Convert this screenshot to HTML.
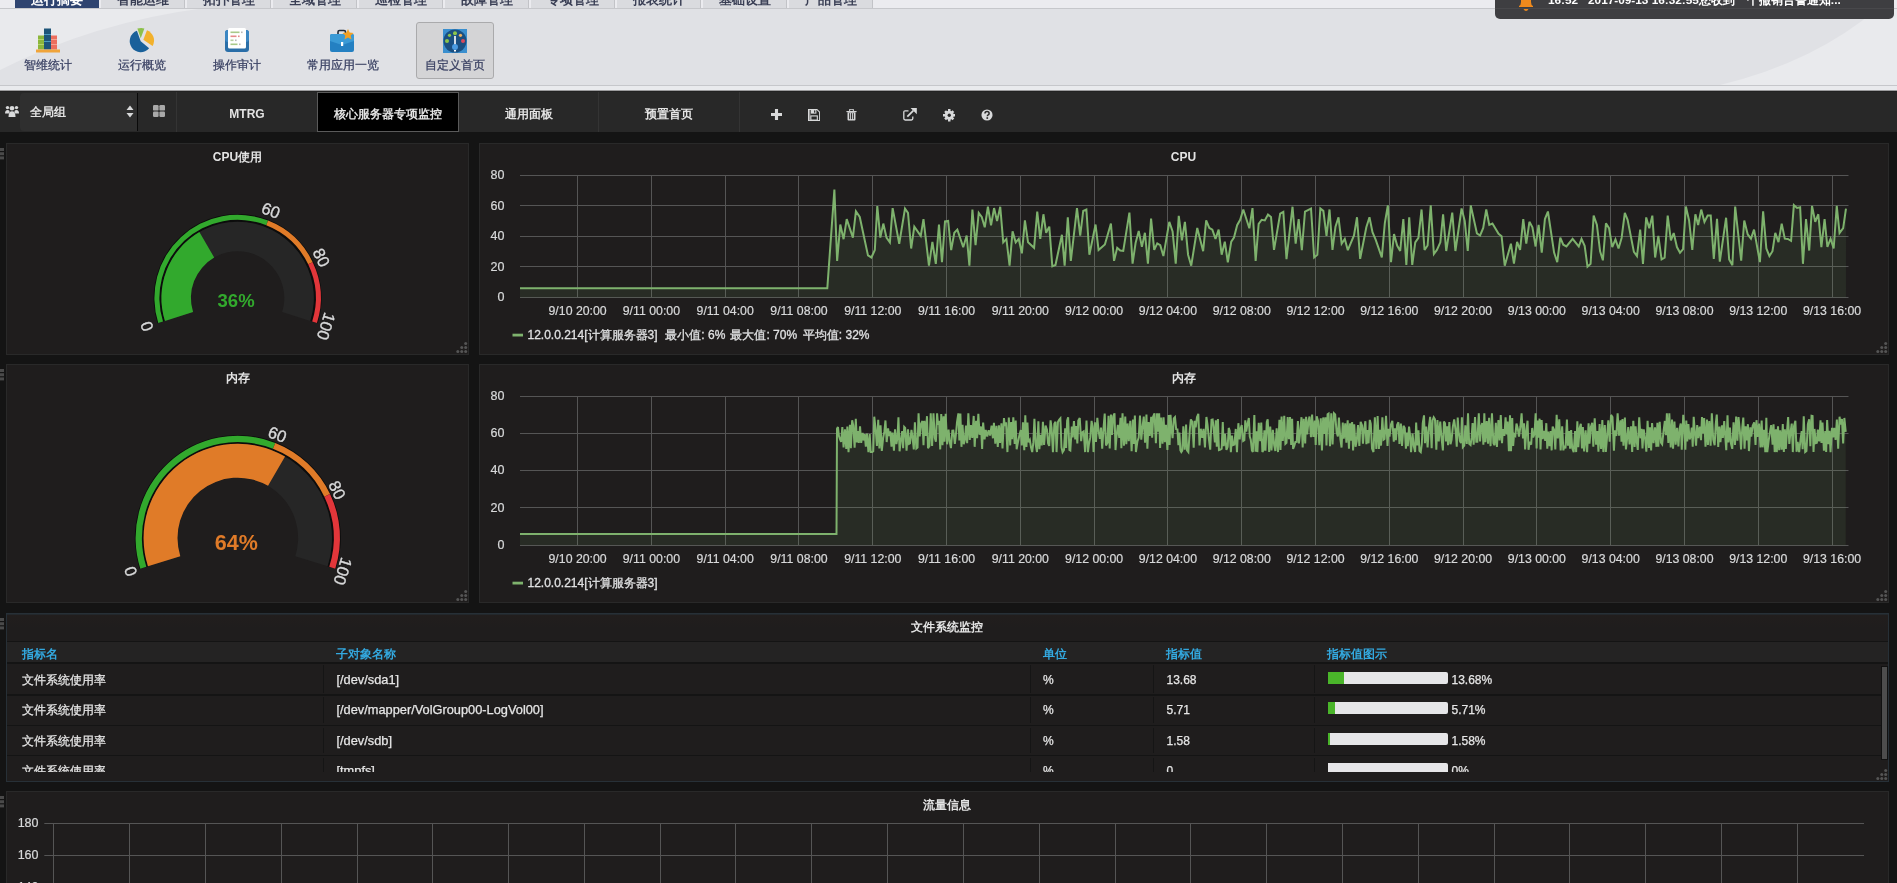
<!DOCTYPE html>
<html><head><meta charset="utf-8">
<style>
*{box-sizing:border-box;margin:0;padding:0}
html,body{width:1897px;height:883px;overflow:hidden;background:#141414;font-family:"Liberation Sans",sans-serif;position:relative}
.a{position:absolute}
#hdr{left:0;top:0;width:1897px;height:92px;background:#e0e1e5;overflow:hidden;will-change:transform}
.tab{top:0;height:8px;background:#dadbdf;border-right:1px solid #c2c3c7;overflow:hidden}
.tab span{position:absolute;left:0;right:0;top:-9px;text-align:center;font-size:13px;font-weight:bold;color:#3a3f55;white-space:nowrap}
.tab.act{background:#2f4470;border-right:none}
.tab.act span{color:#fff}
.tb{top:22px;height:57px;text-align:center}
.tb .lbl{position:absolute;left:0;right:0;top:58px;font-size:12px;color:#3a4163;white-space:nowrap;line-height:14px;-webkit-text-stroke:0.25px #3a4163}
#nav{left:0;top:92px;width:1897px;height:40px;background:#282828;will-change:transform}
.ntab{top:0;height:40px;color:#e3e3e3;font-size:12px;font-weight:bold;text-align:center;line-height:45px;border-right:1px solid #343434}
.panel{background:#1f1d1d;border:1px solid #292929}
.ptitle{position:absolute;left:0;right:0;text-align:center;font-size:12px;font-weight:bold;color:#e3e3e3;white-space:nowrap}
.handle{width:4px;height:12px}
.th{font-size:12px;font-weight:bold;color:#33a9e0;white-space:nowrap;line-height:14px}
.td{font-size:12px;color:#e6e6e6;white-space:nowrap;line-height:14px;-webkit-text-stroke:0.25px #e6e6e6}
</style></head><body>

<div id="hdr" class="a">
  <div class="a" style="left:0;top:0;width:1897px;height:85px;background:#e9eaed"></div>
  <svg class="a" style="left:0;top:0" width="1897" height="85"><path d="M0 70 Q95 22 205 8 L1878 8 Q1815 62 1720 85 L0 85 Z" fill="#e0e1e5"/></svg>
  <div class="a" style="left:0;top:0;width:1897px;height:8px;background:#ebebef"></div>
  <div class="a" style="left:0;top:8px;width:1897px;height:1px;background:#c6c7cb"></div>
  <div class="a tab act" style="left:15px;width:84px"><span>运行摘要</span></div>
  <div class="a tab" style="left:101.4px;width:84px"><span>智能运维</span></div>
  <div class="a tab" style="left:187.4px;width:84px"><span>拓扑管理</span></div>
  <div class="a tab" style="left:273.4px;width:84px"><span>全域管理</span></div>
  <div class="a tab" style="left:359.4px;width:84px"><span>巡检管理</span></div>
  <div class="a tab" style="left:445.4px;width:84px"><span>故障管理</span></div>
  <div class="a tab" style="left:531.4px;width:84px"><span>专项管理</span></div>
  <div class="a tab" style="left:617.4px;width:84px"><span>报表统计</span></div>
  <div class="a tab" style="left:703.4px;width:84px"><span>基础设置</span></div>
  <div class="a tab" style="left:789.4px;width:84px"><span>产品管理</span></div>

  <!-- toolbar buttons -->
  <div class="a tb" style="left:18px;width:60px">
    <svg class="a" style="left:18px;top:6px" width="25" height="25" viewBox="0 0 25 25">
      <rect x="2" y="7.5" width="6" height="14" fill="#8cb63c"/>
      <rect x="8" y="0.5" width="7" height="21" fill="#1d5479"/>
      <rect x="15" y="7.5" width="6" height="14" fill="#ec6e5e"/>
      <rect x="2" y="11" width="6" height="1" fill="#b5d36a"/><rect x="2" y="16" width="6" height="1" fill="#b5d36a"/>
      <rect x="8" y="6" width="7" height="1" fill="#4a9ac0"/><rect x="8" y="13" width="7" height="1" fill="#4a9ac0"/>
      <rect x="15" y="11" width="6" height="1" fill="#f5a08f"/><rect x="15" y="16" width="6" height="1" fill="#f5a08f"/>
      <rect x="0" y="21.5" width="24" height="3" fill="#f0a43a"/>
    </svg>
    <div class="lbl" style="top:36px">智维统计</div>
  </div>
  <div class="a tb" style="left:112px;width:60px">
    <svg class="a" style="left:16px;top:5px" width="30" height="28" viewBox="0 0 30 28">
      <path d="M12.7 14.2 L21.13 21.27 A11 11 0 1 1 8.94 3.86 Z" fill="#19609a"/>
      <path d="M12.7 11.2 L9.4 1.6 A10.5 10.5 0 0 1 16.4 1.4 Z" fill="#8cc04a"/>
      <path d="M15.3 12.7 L19.0 3.3 A11 11 0 0 1 24.6 19.0 Z" fill="#f2b12c"/>
    </svg>
    <div class="lbl" style="top:36px">运行概览</div>
  </div>
  <div class="a tb" style="left:207px;width:60px">
    <svg class="a" style="left:18px;top:6px" width="25" height="25" viewBox="0 0 25 25">
      <rect x="0" y="2" width="24" height="22" rx="3" fill="#2a6ea8"/>
      <rect x="0" y="2" width="24" height="12" rx="3" fill="#3b86c3"/>
      <rect x="3" y="0" width="18" height="20.5" rx="1.5" fill="#ffffff"/>
      <rect x="5.5" y="3.5" width="9" height="1.6" fill="#a9c98a"/><rect x="16" y="3.5" width="1.6" height="1.6" fill="#b8b8b8"/>
      <rect x="5.5" y="7.5" width="6" height="1.6" fill="#e58a8a"/><rect x="13" y="7.5" width="1.6" height="1.6" fill="#e58a8a"/>
      <rect x="5.5" y="11.5" width="3" height="1.6" fill="#b7cfa0"/><rect x="10" y="11.5" width="1.6" height="1.6" fill="#b8b8b8"/>
      <rect x="5.5" y="15.5" width="7" height="1.6" fill="#a9c98a"/><rect x="14" y="15.5" width="1.6" height="1.6" fill="#b8b8b8"/>
    </svg>
    <div class="lbl" style="top:36px">操作审计</div>
  </div>
  <div class="a tb" style="left:304px;width:78px">
    <svg class="a" style="left:26px;top:6px" width="26" height="25" viewBox="0 0 26 25">
      <path d="M8 6.5 V4 Q8 2.5 9.5 2.5 H14 Q15.5 2.5 15.5 4 V6.5" fill="none" stroke="#1f2a38" stroke-width="1.6"/>
      <rect x="0" y="6" width="24" height="18" rx="2" fill="#2480c2"/>
      <path d="M0 8 Q0 6 2 6 H22 Q24 6 24 8 V13 L12 17 L0 13 Z" fill="#3a9ad6"/>
      <rect x="11" y="14" width="2.2" height="4" fill="#ffffff"/>
      <path d="M18 1 L19.7 4.6 L23.6 5 L20.7 7.6 L21.5 11.5 L18 9.5 L14.5 11.5 L15.3 7.6 L12.4 5 L16.3 4.6 Z" fill="#f2a024"/>
    </svg>
    <div class="lbl" style="top:36px">常用应用一览</div>
  </div>
  <div class="a tb" style="left:416px;width:78px;background:#d4d4d6;border:1px solid #aaaaac;border-radius:3px">
    <svg class="a" style="left:26px;top:6px" width="24" height="24" viewBox="0 0 24 24">
      <rect x="0" y="0" width="24" height="24" fill="#3a8fcf"/>
      <circle cx="12" cy="12" r="11.5" fill="#1b4f80"/>
      <circle cx="12" cy="4.3" r="2" fill="#8cc54a"/>
      <circle cx="6.5" cy="6.3" r="1.6" fill="#8cc54a"/>
      <circle cx="4" cy="12" r="2" fill="#8cc54a"/>
      <circle cx="17.5" cy="6.3" r="1.6" fill="#f0b060"/>
      <circle cx="20" cy="12" r="2" fill="#d9495a"/>
      <rect x="11.2" y="7" width="1.6" height="9" fill="#ffffff"/>
      <circle cx="12" cy="18" r="3" fill="#4a9ae0"/>
      <rect x="11" y="21" width="2" height="1.5" fill="#ffffff"/>
    </svg>
    <div class="lbl" style="top:35px">自定义首页</div>
  </div>

  <!-- notification -->
  <div class="a" style="left:1495px;top:-10px;width:399px;height:29px;background:#3e3e41;border-radius:5px;overflow:hidden">
    <div class="a" style="left:0;top:18px;width:399px;height:1px;background:#48484b"></div>
    <svg class="a" style="left:23px;top:0px" width="16" height="21" viewBox="0 0 16 21">
      <path d="M3 0 L13 0 L13 12 Q13 15 15 16 L15 17 L1 17 L1 16 Q3 15 3 12 Z" fill="#f08a1c"/>
      <path d="M5.5 19 H10.5 Q9.5 21 8 21 Q6.5 21 5.5 19 Z" fill="#f08a1c"/>
    </svg>
    <div class="a" style="left:53px;top:3px;font-size:11.8px;font-weight:bold;color:#fff;white-space:nowrap;line-height:14px">16:52&nbsp;&nbsp;&nbsp;2017-09-13 16:32:55您收到一个撤销告警通知...</div>
  </div>
  <div class="a" style="left:0;top:85px;width:1897px;height:1px;background:#c6c7cb"></div>
  <div class="a" style="left:0;top:86px;width:1897px;height:4px;background:#e9eaed"></div>
  <div class="a" style="left:0;top:90px;width:1897px;height:1px;background:#9c9c9e"></div>
  <div class="a" style="left:0;top:91px;width:1897px;height:1px;background:#222"></div>
</div>

<div id="nav" class="a">
  <svg class="a" style="left:5px;top:13px" width="14" height="13" viewBox="0 0 14 13">
    <circle cx="2.5" cy="2.6" r="1.7" fill="#d8d9da"/><circle cx="11.5" cy="2.6" r="1.7" fill="#d8d9da"/>
    <circle cx="7" cy="3.3" r="2.3" fill="#d8d9da"/>
    <path d="M0 8.5 Q0 5 2.5 5 Q4 5 4.5 6 L4.5 8.5 Z" fill="#d8d9da"/>
    <path d="M14 8.5 Q14 5 11.5 5 Q10 5 9.5 6 L9.5 8.5 Z" fill="#d8d9da"/>
    <path d="M3.5 12 Q3.5 6.3 7 6.3 Q10.5 6.3 10.5 12 Z" fill="#d8d9da"/>
  </svg>
  <div class="a" style="left:20px;top:1px;width:117px;height:38px;background:#2f2f2f;border-radius:4px 0 0 4px"></div>
  <div class="a" style="left:137px;top:1px;width:1px;height:38px;background:#0a0a0a"></div>
  <div class="a" style="left:30px;top:0;line-height:41px;font-size:12px;color:#e3e3e3;font-weight:bold;white-space:nowrap">全局组</div>
  <svg class="a" style="left:126px;top:13px" width="8" height="13" viewBox="0 0 8 13"><path d="M4 0.5 L7.5 5 L0.5 5 Z M4 12.5 L7.5 8 L0.5 8 Z" fill="#d8d9da"/></svg>
  <svg class="a" style="left:153px;top:13px" width="13" height="13" viewBox="0 0 13 13">
    <rect x="0" y="0" width="5.6" height="5.6" rx="1.2" fill="#a9a9a9"/><rect x="6.4" y="0" width="5.6" height="5.6" rx="1.2" fill="#a9a9a9"/>
    <rect x="0" y="6.4" width="5.6" height="5.6" rx="1.2" fill="#a9a9a9"/><rect x="6.4" y="6.4" width="5.6" height="5.6" rx="1.2" fill="#a9a9a9"/>
  </svg>
  <div class="a" style="left:176px;top:0;width:1px;height:40px;background:#343434"></div>
  <div class="a ntab" style="left:177px;width:140px;border:none">MTRG</div>
  <div class="a ntab" style="left:317px;width:142px;background:#000;border:1px solid #5a5a5a;line-height:43px">核心服务器专项监控</div>
  <div class="a ntab" style="left:459px;width:140px">通用面板</div>
  <div class="a ntab" style="left:599px;width:141px">预置首页</div>
  <svg class="a" style="left:771.3px;top:17.3px" width="11" height="11" viewBox="0 0 12 12"><path d="M4.3 0 H7.7 V4.3 H12 V7.7 H7.7 V12 H4.3 V7.7 H0 V4.3 H4.3 Z" fill="#d8d9da"/></svg>
  <svg class="a" style="left:808px;top:17px" width="12.2" height="12" viewBox="0 0 13 13">
    <path d="M0.5 0.5 H9.5 L12.5 3.5 V12.5 H0.5 Z" fill="none" stroke="#d8d9da" stroke-width="1.2"/>
    <rect x="3" y="1" width="6" height="4" fill="#d8d9da"/><rect x="6.5" y="1.5" width="1.3" height="2.5" fill="#282828"/>
    <rect x="1" y="1" width="1.5" height="11" fill="#9a9a9a"/>
    <rect x="3" y="7.5" width="7" height="4.5" fill="none" stroke="#d8d9da" stroke-width="1.2"/>
  </svg>
  <svg class="a" style="left:846px;top:17px" width="11" height="12" viewBox="0 0 11 13">
    <path d="M0 2.2 H11 V3.4 H0 Z" fill="#d8d9da"/><path d="M3.5 2.2 V1 Q3.5 0.3 4.2 0.3 H6.8 Q7.5 0.3 7.5 1 V2.2" fill="none" stroke="#d8d9da" stroke-width="1.1"/>
    <path d="M1.2 3.4 H9.8 V11.5 Q9.8 12.5 8.8 12.5 H2.2 Q1.2 12.5 1.2 11.5 Z" fill="#d8d9da"/>
    <rect x="3" y="4.5" width="1" height="6.5" fill="#282828"/><rect x="5" y="4.5" width="1" height="6.5" fill="#282828"/><rect x="7" y="4.5" width="1" height="6.5" fill="#282828"/>
  </svg>
  <svg class="a" style="left:903px;top:15.8px" width="14" height="13" viewBox="0 0 14 13">
    <path d="M5.5 2.8 H2.2 Q0.8 2.8 0.8 4.2 V10.6 Q0.8 12 2.2 12 H8.4 Q9.8 12 9.8 10.6 V8.5" fill="none" stroke="#d8d9da" stroke-width="1.3"/>
    <path d="M4.3 8.6 L10.3 2.6" stroke="#d8d9da" stroke-width="1.8"/><path d="M7.6 0 H13.8 V6.2 Z" fill="#d8d9da"/>
  </svg>
  <svg class="a" style="left:942.5px;top:17px" width="12.5" height="12.5" viewBox="0 0 13 13">
    <g fill="#d8d9da"><circle cx="6.5" cy="6.5" r="4.7"/>
    <rect x="5.2" y="0" width="2.6" height="13"/><rect x="0" y="5.2" width="13" height="2.6"/>
    <rect x="5.2" y="0.4" width="2.6" height="12.2" transform="rotate(45 6.5 6.5)"/><rect x="5.2" y="0.4" width="2.6" height="12.2" transform="rotate(-45 6.5 6.5)"/></g>
    <circle cx="6.5" cy="6.5" r="1.7" fill="#282828"/>
  </svg>
  <svg class="a" style="left:980.6px;top:17px" width="12" height="12" viewBox="0 0 13 13">
    <circle cx="6.5" cy="6.5" r="6" fill="#d8d9da"/>
    <path d="M4.3 5 Q4.3 2.8 6.6 2.8 Q8.8 2.8 8.8 4.8 Q8.8 6 7.4 6.6 Q6.9 6.9 6.9 7.8" fill="none" stroke="#282828" stroke-width="1.6"/>
    <rect x="5.9" y="8.9" width="1.8" height="1.8" fill="#282828"/>
  </svg>
</div>

<!-- panels -->
<div class="a panel" style="left:6px;top:143px;width:463px;height:212px"></div>
<div class="a panel" style="left:479px;top:143px;width:1410px;height:212px"></div>
<div class="a panel" style="left:6px;top:364px;width:463px;height:239px"></div>
<div class="a panel" style="left:479px;top:364px;width:1410px;height:239px"></div>
<div class="a panel" style="left:6px;top:613px;width:1883px;height:169px;border-color:#273037;background:linear-gradient(#221e1d,#1f1d1d 14px)"></div>
<div class="a" style="left:7px;top:614px;width:1881px;height:1px;background:#23282c"></div>
<div class="a panel" style="left:6px;top:791px;width:1883px;height:120px"></div>

<!-- PANELS_START -->
<div class="a" style="left:7px;top:641px;width:1881px;height:131px;overflow:hidden;will-change:transform">
<div class="a" style="left:0;top:0;width:1881px;height:1.5px;background:#141414"></div>
<div class="a" style="left:0;top:1px;width:1881px;height:20px;background:#242323"></div>
<div class="a" style="left:0;top:21px;width:1881px;height:1.5px;background:#141414"></div>
<div class="a th" style="left:15px;top:6px">指标名</div>
<div class="a th" style="left:329px;top:6px">子对象名称</div>
<div class="a th" style="left:1036px;top:6px">单位</div>
<div class="a th" style="left:1159px;top:6px">指标值</div>
<div class="a th" style="left:1320px;top:6px">指标值图示</div>
<div class="a" style="left:316px;top:24.0px;width:1px;height:27.8px;background:#151515"></div>
<div class="a" style="left:1023px;top:24.0px;width:1px;height:27.8px;background:#151515"></div>
<div class="a" style="left:1146px;top:24.0px;width:1px;height:27.8px;background:#151515"></div>
<div class="a" style="left:1307px;top:24.0px;width:1px;height:27.8px;background:#151515"></div>
<div class="a td" style="left:15px;top:32.1px">文件系统使用率</div>
<div class="a td" style="left:329.5px;top:32.1px;font-size:12.8px">[/dev/sda1]</div>
<div class="a td" style="left:1036px;top:32.1px">%</div>
<div class="a td" style="left:1159.5px;top:32.1px">13.68</div>
<div class="a" style="left:1321px;top:31.1px;width:120px;height:12px;background:#e6e6e8;border-radius:0 2px 2px 0;overflow:hidden"><div style="width:16.42px;height:12px;background:#4ab52a"></div></div>
<div class="a td" style="left:1444.5px;top:32.1px">13.68%</div>
<div class="a" style="left:0;top:53.3px;width:1874px;height:1.5px;background:#141414"></div>
<div class="a" style="left:316px;top:56.0px;width:1px;height:26.3px;background:#151515"></div>
<div class="a" style="left:1023px;top:56.0px;width:1px;height:26.3px;background:#151515"></div>
<div class="a" style="left:1146px;top:56.0px;width:1px;height:26.3px;background:#151515"></div>
<div class="a" style="left:1307px;top:56.0px;width:1px;height:26.3px;background:#151515"></div>
<div class="a td" style="left:15px;top:62.3px">文件系统使用率</div>
<div class="a td" style="left:329.5px;top:62.3px;font-size:12.8px">[/dev/mapper/VolGroup00-LogVol00]</div>
<div class="a td" style="left:1036px;top:62.3px">%</div>
<div class="a td" style="left:1159.5px;top:62.3px">5.71</div>
<div class="a" style="left:1321px;top:61.3px;width:120px;height:12px;background:#e6e6e8;border-radius:0 2px 2px 0;overflow:hidden"><div style="width:6.85px;height:12px;background:#4ab52a"></div></div>
<div class="a td" style="left:1444.5px;top:62.3px">5.71%</div>
<div class="a" style="left:0;top:83.8px;width:1874px;height:1.5px;background:#141414"></div>
<div class="a" style="left:316px;top:86.5px;width:1px;height:25.9px;background:#151515"></div>
<div class="a" style="left:1023px;top:86.5px;width:1px;height:25.9px;background:#151515"></div>
<div class="a" style="left:1146px;top:86.5px;width:1px;height:25.9px;background:#151515"></div>
<div class="a" style="left:1307px;top:86.5px;width:1px;height:25.9px;background:#151515"></div>
<div class="a td" style="left:15px;top:92.5px">文件系统使用率</div>
<div class="a td" style="left:329.5px;top:92.5px;font-size:12.8px">[/dev/sdb]</div>
<div class="a td" style="left:1036px;top:92.5px">%</div>
<div class="a td" style="left:1159.5px;top:92.5px">1.58</div>
<div class="a" style="left:1321px;top:91.5px;width:120px;height:12px;background:#e6e6e8;border-radius:0 2px 2px 0;overflow:hidden"><div style="width:1.90px;height:12px;background:#4ab52a"></div></div>
<div class="a td" style="left:1444.5px;top:92.5px">1.58%</div>
<div class="a" style="left:0;top:113.9px;width:1874px;height:1.5px;background:#141414"></div>
<div class="a" style="left:316px;top:116.5px;width:1px;height:22.0px;background:#151515"></div>
<div class="a" style="left:1023px;top:116.5px;width:1px;height:22.0px;background:#151515"></div>
<div class="a" style="left:1146px;top:116.5px;width:1px;height:22.0px;background:#151515"></div>
<div class="a" style="left:1307px;top:116.5px;width:1px;height:22.0px;background:#151515"></div>
<div class="a td" style="left:15px;top:122.7px">文件系统使用率</div>
<div class="a td" style="left:329.5px;top:122.7px;font-size:12.8px">[tmpfs]</div>
<div class="a td" style="left:1036px;top:122.7px">%</div>
<div class="a td" style="left:1159.5px;top:122.7px">0</div>
<div class="a" style="left:1321px;top:121.7px;width:120px;height:12px;background:#e6e6e8;border-radius:0 2px 2px 0;overflow:hidden"><div style="width:0.00px;height:12px;background:#4ab52a"></div></div>
<div class="a td" style="left:1444.5px;top:122.7px">0%</div>
<div class="a" style="left:1874px;top:25px;width:7px;height:94px;background:#4d4d4d;border:1px solid #111"></div>
</div>
<svg class="a" style="left:0;top:0;will-change:transform" width="1897" height="883" font-family="'Liberation Sans',sans-serif">
<rect x="0" y="148.0" width="4" height="3" fill="#4a4a4a"/><rect x="0" y="152.2" width="4" height="3" fill="#4a4a4a"/><rect x="0" y="156.4" width="4" height="3" fill="#4a4a4a"/>
<rect x="0" y="369.0" width="4" height="3" fill="#4a4a4a"/><rect x="0" y="373.2" width="4" height="3" fill="#4a4a4a"/><rect x="0" y="377.4" width="4" height="3" fill="#4a4a4a"/>
<rect x="0" y="618.0" width="4" height="3" fill="#4a4a4a"/><rect x="0" y="622.2" width="4" height="3" fill="#4a4a4a"/><rect x="0" y="626.4" width="4" height="3" fill="#4a4a4a"/>
<rect x="0" y="796.0" width="4" height="3" fill="#4a4a4a"/><rect x="0" y="800.2" width="4" height="3" fill="#4a4a4a"/><rect x="0" y="804.4" width="4" height="3" fill="#4a4a4a"/>
<text x="237.5" y="160.5" text-anchor="middle" font-size="12" font-weight="bold" fill="#e3e3e3">CPU使用</text>
<text x="1183.5" y="160.5" text-anchor="middle" font-size="12" font-weight="bold" fill="#e3e3e3">CPU</text>
<text x="237.5" y="381.5" text-anchor="middle" font-size="12" font-weight="bold" fill="#e3e3e3">内存</text>
<text x="1183.5" y="381.5" text-anchor="middle" font-size="12" font-weight="bold" fill="#e3e3e3">内存</text>
<text x="947" y="630.5" text-anchor="middle" font-size="12" font-weight="bold" fill="#e3e3e3">文件系统监控</text>
<text x="947" y="808.5" text-anchor="middle" font-size="12" font-weight="bold" fill="#e3e3e3">流量信息</text>
<path d="M157.49 323.26 A84.0 84.0 0 1 1 317.71 323.26 L309.99 320.82 A75.9 75.9 0 1 0 165.21 320.82 Z" fill="#0c0c0c"/>
<path d="M164.93 320.91 A76.2 76.2 0 1 1 310.27 320.91 L282.14 312.04 A46.7 46.7 0 1 0 193.06 312.04 Z" fill="#262626"/>
<path d="M164.93 320.91 A76.2 76.2 0 0 1 199.38 232.08 L214.18 257.60 A46.7 46.7 0 0 0 193.06 312.04 Z" fill="#32a92d"/>
<path d="M158.25 323.02 A83.2 83.2 0 0 1 268.09 220.59 L266.26 225.24 A78.2 78.2 0 0 0 163.02 321.52 Z" fill="#32a92d"/>
<path d="M268.09 220.59 A83.2 83.2 0 0 1 312.70 262.18 L308.18 264.33 A78.2 78.2 0 0 0 266.26 225.24 Z" fill="#e07b28"/>
<path d="M312.70 262.18 A83.2 83.2 0 0 1 316.95 323.02 L312.18 321.52 A78.2 78.2 0 0 0 308.18 264.33 Z" fill="#e2363a"/>
<text x="0" y="0" transform="translate(146.56 326.36) rotate(252.5)" text-anchor="middle" dominant-baseline="central" font-size="16.5" fill="#d8d9da" stroke="#d8d9da" stroke-width="0.35">0</text>
<text x="0" y="0" transform="translate(271.06 210.26) rotate(381.5)" text-anchor="middle" dominant-baseline="central" font-size="16.5" fill="#d8d9da" stroke="#d8d9da" stroke-width="0.35">60</text>
<text x="0" y="0" transform="translate(321.61 257.40) rotate(424.5)" text-anchor="middle" dominant-baseline="central" font-size="16.5" fill="#d8d9da" stroke="#d8d9da" stroke-width="0.35">80</text>
<text x="0" y="0" transform="translate(326.44 326.36) rotate(467.5)" text-anchor="middle" dominant-baseline="central" font-size="16.5" fill="#d8d9da" stroke="#d8d9da" stroke-width="0.35">100</text>
<text x="236.1" y="307" text-anchor="middle" font-size="18.5" font-weight="bold" fill="#32a92d">36%</text>
<path d="M139.57 568.97 A103.0 103.0 0 1 1 336.03 568.97 L327.35 566.24 A93.9 93.9 0 1 0 148.25 566.24 Z" fill="#0c0c0c"/>
<path d="M147.96 566.33 A94.2 94.2 0 1 1 327.64 566.33 L295.31 556.13 A60.3 60.3 0 1 0 180.29 556.13 Z" fill="#262626"/>
<path d="M147.96 566.33 A94.2 94.2 0 0 1 285.04 456.50 L268.04 485.83 A60.3 60.3 0 0 0 180.29 556.13 Z" fill="#e07b28"/>
<path d="M140.33 568.73 A102.2 102.2 0 0 1 275.26 442.91 L272.95 448.77 A95.9 95.9 0 0 0 146.34 566.84 Z" fill="#32a92d"/>
<path d="M275.26 442.91 A102.2 102.2 0 0 1 330.04 494.00 L324.36 496.71 A95.9 95.9 0 0 0 272.95 448.77 Z" fill="#e07b28"/>
<path d="M330.04 494.00 A102.2 102.2 0 0 1 335.27 568.73 L329.26 566.84 A95.9 95.9 0 0 0 324.36 496.71 Z" fill="#e2363a"/>
<text x="0" y="0" transform="translate(130.36 571.53) rotate(252.5)" text-anchor="middle" dominant-baseline="central" font-size="16.5" fill="#d8d9da" stroke="#d8d9da" stroke-width="0.35">0</text>
<text x="0" y="0" transform="translate(277.56 434.26) rotate(381.5)" text-anchor="middle" dominant-baseline="central" font-size="16.5" fill="#d8d9da" stroke="#d8d9da" stroke-width="0.35">60</text>
<text x="0" y="0" transform="translate(337.34 490.00) rotate(424.5)" text-anchor="middle" dominant-baseline="central" font-size="16.5" fill="#d8d9da" stroke="#d8d9da" stroke-width="0.35">80</text>
<text x="0" y="0" transform="translate(343.04 571.53) rotate(467.5)" text-anchor="middle" dominant-baseline="central" font-size="16.5" fill="#d8d9da" stroke="#d8d9da" stroke-width="0.35">100</text>
<text x="236.3" y="549.5" text-anchor="middle" font-size="21.5" font-weight="bold" fill="#e07b28">64%</text>
<line x1="520" y1="297.50" x2="1848.5" y2="297.50" stroke="#555555" stroke-width="1"/>
<text x="504.5" y="301.20" text-anchor="end" font-size="12.5" fill="#d8d9da" stroke="#d8d9da" stroke-width="0.2">0</text>
<line x1="520" y1="266.50" x2="1848.5" y2="266.50" stroke="#555555" stroke-width="1"/>
<text x="504.5" y="270.65" text-anchor="end" font-size="12.5" fill="#d8d9da" stroke="#d8d9da" stroke-width="0.2">20</text>
<line x1="520" y1="236.50" x2="1848.5" y2="236.50" stroke="#555555" stroke-width="1"/>
<text x="504.5" y="240.10" text-anchor="end" font-size="12.5" fill="#d8d9da" stroke="#d8d9da" stroke-width="0.2">40</text>
<line x1="520" y1="205.50" x2="1848.5" y2="205.50" stroke="#555555" stroke-width="1"/>
<text x="504.5" y="209.55" text-anchor="end" font-size="12.5" fill="#d8d9da" stroke="#d8d9da" stroke-width="0.2">60</text>
<line x1="520" y1="175.50" x2="1848.5" y2="175.50" stroke="#555555" stroke-width="1"/>
<text x="504.5" y="179.00" text-anchor="end" font-size="12.5" fill="#d8d9da" stroke="#d8d9da" stroke-width="0.2">80</text>
<line x1="577.50" y1="175.00" x2="577.50" y2="298.00" stroke="#555555" stroke-width="1"/>
<text x="577.60" y="315" text-anchor="middle" font-size="12.3" fill="#d8d9da" stroke="#d8d9da" stroke-width="0.2">9/10 20:00</text>
<line x1="651.50" y1="175.00" x2="651.50" y2="298.00" stroke="#555555" stroke-width="1"/>
<text x="651.39" y="315" text-anchor="middle" font-size="12.3" fill="#d8d9da" stroke="#d8d9da" stroke-width="0.2">9/11 00:00</text>
<line x1="725.50" y1="175.00" x2="725.50" y2="298.00" stroke="#555555" stroke-width="1"/>
<text x="725.18" y="315" text-anchor="middle" font-size="12.3" fill="#d8d9da" stroke="#d8d9da" stroke-width="0.2">9/11 04:00</text>
<line x1="798.50" y1="175.00" x2="798.50" y2="298.00" stroke="#555555" stroke-width="1"/>
<text x="798.97" y="315" text-anchor="middle" font-size="12.3" fill="#d8d9da" stroke="#d8d9da" stroke-width="0.2">9/11 08:00</text>
<line x1="872.50" y1="175.00" x2="872.50" y2="298.00" stroke="#555555" stroke-width="1"/>
<text x="872.76" y="315" text-anchor="middle" font-size="12.3" fill="#d8d9da" stroke="#d8d9da" stroke-width="0.2">9/11 12:00</text>
<line x1="946.50" y1="175.00" x2="946.50" y2="298.00" stroke="#555555" stroke-width="1"/>
<text x="946.55" y="315" text-anchor="middle" font-size="12.3" fill="#d8d9da" stroke="#d8d9da" stroke-width="0.2">9/11 16:00</text>
<line x1="1020.50" y1="175.00" x2="1020.50" y2="298.00" stroke="#555555" stroke-width="1"/>
<text x="1020.34" y="315" text-anchor="middle" font-size="12.3" fill="#d8d9da" stroke="#d8d9da" stroke-width="0.2">9/11 20:00</text>
<line x1="1094.50" y1="175.00" x2="1094.50" y2="298.00" stroke="#555555" stroke-width="1"/>
<text x="1094.13" y="315" text-anchor="middle" font-size="12.3" fill="#d8d9da" stroke="#d8d9da" stroke-width="0.2">9/12 00:00</text>
<line x1="1167.50" y1="175.00" x2="1167.50" y2="298.00" stroke="#555555" stroke-width="1"/>
<text x="1167.92" y="315" text-anchor="middle" font-size="12.3" fill="#d8d9da" stroke="#d8d9da" stroke-width="0.2">9/12 04:00</text>
<line x1="1241.50" y1="175.00" x2="1241.50" y2="298.00" stroke="#555555" stroke-width="1"/>
<text x="1241.71" y="315" text-anchor="middle" font-size="12.3" fill="#d8d9da" stroke="#d8d9da" stroke-width="0.2">9/12 08:00</text>
<line x1="1315.50" y1="175.00" x2="1315.50" y2="298.00" stroke="#555555" stroke-width="1"/>
<text x="1315.50" y="315" text-anchor="middle" font-size="12.3" fill="#d8d9da" stroke="#d8d9da" stroke-width="0.2">9/12 12:00</text>
<line x1="1389.50" y1="175.00" x2="1389.50" y2="298.00" stroke="#555555" stroke-width="1"/>
<text x="1389.29" y="315" text-anchor="middle" font-size="12.3" fill="#d8d9da" stroke="#d8d9da" stroke-width="0.2">9/12 16:00</text>
<line x1="1463.50" y1="175.00" x2="1463.50" y2="298.00" stroke="#555555" stroke-width="1"/>
<text x="1463.08" y="315" text-anchor="middle" font-size="12.3" fill="#d8d9da" stroke="#d8d9da" stroke-width="0.2">9/12 20:00</text>
<line x1="1536.50" y1="175.00" x2="1536.50" y2="298.00" stroke="#555555" stroke-width="1"/>
<text x="1536.87" y="315" text-anchor="middle" font-size="12.3" fill="#d8d9da" stroke="#d8d9da" stroke-width="0.2">9/13 00:00</text>
<line x1="1610.50" y1="175.00" x2="1610.50" y2="298.00" stroke="#555555" stroke-width="1"/>
<text x="1610.66" y="315" text-anchor="middle" font-size="12.3" fill="#d8d9da" stroke="#d8d9da" stroke-width="0.2">9/13 04:00</text>
<line x1="1684.50" y1="175.00" x2="1684.50" y2="298.00" stroke="#555555" stroke-width="1"/>
<text x="1684.45" y="315" text-anchor="middle" font-size="12.3" fill="#d8d9da" stroke="#d8d9da" stroke-width="0.2">9/13 08:00</text>
<line x1="1758.50" y1="175.00" x2="1758.50" y2="298.00" stroke="#555555" stroke-width="1"/>
<text x="1758.24" y="315" text-anchor="middle" font-size="12.3" fill="#d8d9da" stroke="#d8d9da" stroke-width="0.2">9/13 12:00</text>
<line x1="1832.50" y1="175.00" x2="1832.50" y2="298.00" stroke="#555555" stroke-width="1"/>
<text x="1832.03" y="315" text-anchor="middle" font-size="12.3" fill="#d8d9da" stroke="#d8d9da" stroke-width="0.2">9/13 16:00</text>
<path d="M520.00 288.33 L827.30 288.33 L834.39 189.59 L837.13 260.87 L840.29 224.54 L843.57 239.21 L846.73 219.06 L852.89 237.57 L855.91 211.25 L859.75 217.01 L867.97 255.38 L871.40 257.44 L874.82 249.90 L877.29 206.04 L880.31 237.57 L883.32 223.59 L886.47 237.57 L889.90 242.36 L892.64 208.10 L899.22 243.73 L904.98 208.51 L907.99 212.89 L911.15 248.53 L914.30 226.60 L920.74 235.92 L923.48 219.06 L928.96 265.66 L932.39 241.95 L935.82 263.88 L938.97 224.54 L941.98 262.24 L945.00 221.39 L948.15 220.84 L951.17 250.18 L954.32 232.77 L957.34 229.62 L963.23 247.16 L966.66 235.51 L969.40 265.66 L972.41 209.47 L975.56 245.10 L978.72 212.89 L981.73 217.01 L984.75 227.29 L987.90 206.73 L991.05 225.23 L994.07 208.10 L997.08 221.12 L1000.24 206.73 L1003.25 242.36 L1006.40 238.94 L1009.56 265.66 L1012.57 231.40 L1015.72 242.36 L1018.74 238.94 L1021.89 253.33 L1024.91 220.43 L1028.06 242.36 L1034.09 247.85 L1037.24 211.52 L1040.26 238.94 L1043.41 214.27 L1046.15 232.77 L1049.30 226.60 L1052.32 266.35 L1055.47 264.98 L1061.91 234.82 L1064.65 265.66 L1067.81 217.28 L1070.82 260.87 L1076.99 208.10 L1080.21 235.51 L1083.22 210.84 L1086.38 209.47 L1089.39 254.70 L1095.56 224.54 L1098.57 249.90 L1101.73 247.16 L1104.88 244.42 L1110.91 223.59 L1114.06 260.87 L1117.21 247.85 L1120.23 250.59 L1123.25 251.00 L1129.41 212.62 L1132.57 263.61 L1135.58 243.05 L1138.73 230.99 L1141.89 246.89 L1144.90 232.77 L1147.92 263.61 L1151.07 218.65 L1154.22 249.90 L1157.24 243.32 L1160.25 245.10 L1163.40 256.07 L1169.30 221.80 L1172.59 231.40 L1175.74 263.61 L1178.76 215.91 L1181.91 240.31 L1184.92 221.80 L1188.08 254.70 L1191.23 265.66 L1197.26 227.97 L1203.15 251.27 L1206.17 220.43 L1209.32 227.97 L1212.34 229.62 L1215.49 238.94 L1218.64 229.62 L1221.66 254.70 L1224.81 241.68 L1227.82 262.24 L1231.25 241.68 L1233.99 237.57 L1237.14 225.23 L1240.16 219.75 L1243.31 209.47 L1249.34 228.25 L1252.49 208.10 L1255.65 260.87 L1258.66 223.86 L1261.68 219.75 L1264.83 220.43 L1267.98 214.54 L1271.00 217.01 L1274.01 249.90 L1280.18 213.58 L1283.33 211.80 L1286.49 259.22 L1292.52 206.73 L1295.67 243.73 L1298.68 219.06 L1301.84 250.18 L1304.99 211.52 L1311.02 208.51 L1314.17 257.44 L1317.32 254.70 L1320.34 208.51 L1323.36 210.84 L1326.51 235.92 L1329.52 209.47 L1332.47 249.90 L1335.48 226.60 L1338.50 217.28 L1341.65 243.73 L1344.80 238.94 L1347.82 250.18 L1353.99 235.51 L1357.00 217.28 L1360.15 258.81 L1366.32 227.29 L1369.47 217.28 L1372.49 232.08 L1375.64 239.62 L1381.81 257.44 L1384.82 223.17 L1387.84 205.36 L1390.99 262.24 L1394.01 234.14 L1397.16 245.52 L1400.18 251.00 L1403.33 219.06 L1406.34 264.98 L1409.22 217.28 L1412.24 264.98 L1415.25 242.36 L1418.40 237.84 L1421.56 209.47 L1424.57 249.90 L1427.59 245.52 L1430.74 205.36 L1433.89 254.01 L1436.91 249.90 L1440.33 242.36 L1443.08 214.27 L1446.23 251.00 L1452.26 212.62 L1455.41 251.00 L1461.58 208.51 L1464.73 220.84 L1467.75 251.00 L1470.76 205.36 L1476.93 233.45 L1480.08 235.51 L1483.23 227.97 L1486.25 209.47 L1489.27 224.96 L1492.42 223.59 L1498.59 233.73 L1501.60 236.20 L1504.75 265.66 L1510.92 243.73 L1513.94 263.61 L1517.09 241.95 L1520.10 249.90 L1523.26 219.06 L1526.27 243.73 L1529.42 221.80 L1532.44 227.29 L1535.59 246.47 L1538.61 224.96 L1541.76 252.64 L1544.91 219.06 L1547.93 211.52 L1554.10 252.64 L1557.25 262.24 L1560.26 237.57 L1563.28 244.69 L1566.43 246.47 L1572.60 238.94 L1578.77 246.47 L1581.51 238.94 L1584.66 245.79 L1587.51 266.62 L1590.59 263.82 L1593.66 215.62 L1596.87 224.71 L1600.09 251.25 L1602.88 260.33 L1605.96 223.31 L1609.03 228.20 L1612.24 247.06 L1615.46 239.37 L1618.53 248.45 L1621.60 237.98 L1624.82 212.83 L1627.61 219.82 L1633.90 251.95 L1636.97 256.14 L1640.18 229.59 L1642.98 263.82 L1646.19 217.44 L1649.26 228.20 L1652.34 215.62 L1655.13 257.54 L1658.34 235.88 L1661.56 259.35 L1664.63 257.54 L1667.70 215.62 L1670.92 240.35 L1673.71 233.09 L1676.93 247.06 L1680.00 252.65 L1683.07 249.15 L1685.87 206.54 L1689.08 220.51 L1692.29 249.85 L1695.37 214.23 L1698.16 224.98 L1701.23 209.62 L1704.45 221.91 L1707.66 215.62 L1710.73 215.62 L1713.81 258.93 L1717.02 218.84 L1719.81 261.73 L1726.10 217.72 L1729.17 259.35 L1732.39 265.22 L1735.18 206.54 L1741.19 260.75 L1744.26 220.51 L1747.75 234.48 L1750.97 238.68 L1754.04 229.59 L1759.91 262.15 L1763.12 211.43 L1766.34 248.45 L1769.41 256.14 L1772.48 251.25 L1775.28 232.81 L1778.49 242.17 L1781.70 223.59 L1784.78 238.68 L1787.85 238.96 L1791.06 240.77 L1793.86 205.15 L1797.07 207.94 L1800.14 207.24 L1802.94 263.82 L1806.01 219.12 L1809.22 250.55 L1812.02 205.85 L1815.23 221.91 L1818.31 214.23 L1821.38 247.06 L1824.59 219.12 L1827.39 246.78 L1830.60 238.68 L1833.67 248.45 L1836.75 205.85 L1839.54 233.09 L1843.17 228.20 L1845.97 208.64 L1845.97 297.50 L520.00 297.50 Z" fill="rgba(126,178,109,0.1)"/>
<path d="M520.00 288.33 L827.30 288.33 L834.39 189.59 L837.13 260.87 L840.29 224.54 L843.57 239.21 L846.73 219.06 L852.89 237.57 L855.91 211.25 L859.75 217.01 L867.97 255.38 L871.40 257.44 L874.82 249.90 L877.29 206.04 L880.31 237.57 L883.32 223.59 L886.47 237.57 L889.90 242.36 L892.64 208.10 L899.22 243.73 L904.98 208.51 L907.99 212.89 L911.15 248.53 L914.30 226.60 L920.74 235.92 L923.48 219.06 L928.96 265.66 L932.39 241.95 L935.82 263.88 L938.97 224.54 L941.98 262.24 L945.00 221.39 L948.15 220.84 L951.17 250.18 L954.32 232.77 L957.34 229.62 L963.23 247.16 L966.66 235.51 L969.40 265.66 L972.41 209.47 L975.56 245.10 L978.72 212.89 L981.73 217.01 L984.75 227.29 L987.90 206.73 L991.05 225.23 L994.07 208.10 L997.08 221.12 L1000.24 206.73 L1003.25 242.36 L1006.40 238.94 L1009.56 265.66 L1012.57 231.40 L1015.72 242.36 L1018.74 238.94 L1021.89 253.33 L1024.91 220.43 L1028.06 242.36 L1034.09 247.85 L1037.24 211.52 L1040.26 238.94 L1043.41 214.27 L1046.15 232.77 L1049.30 226.60 L1052.32 266.35 L1055.47 264.98 L1061.91 234.82 L1064.65 265.66 L1067.81 217.28 L1070.82 260.87 L1076.99 208.10 L1080.21 235.51 L1083.22 210.84 L1086.38 209.47 L1089.39 254.70 L1095.56 224.54 L1098.57 249.90 L1101.73 247.16 L1104.88 244.42 L1110.91 223.59 L1114.06 260.87 L1117.21 247.85 L1120.23 250.59 L1123.25 251.00 L1129.41 212.62 L1132.57 263.61 L1135.58 243.05 L1138.73 230.99 L1141.89 246.89 L1144.90 232.77 L1147.92 263.61 L1151.07 218.65 L1154.22 249.90 L1157.24 243.32 L1160.25 245.10 L1163.40 256.07 L1169.30 221.80 L1172.59 231.40 L1175.74 263.61 L1178.76 215.91 L1181.91 240.31 L1184.92 221.80 L1188.08 254.70 L1191.23 265.66 L1197.26 227.97 L1203.15 251.27 L1206.17 220.43 L1209.32 227.97 L1212.34 229.62 L1215.49 238.94 L1218.64 229.62 L1221.66 254.70 L1224.81 241.68 L1227.82 262.24 L1231.25 241.68 L1233.99 237.57 L1237.14 225.23 L1240.16 219.75 L1243.31 209.47 L1249.34 228.25 L1252.49 208.10 L1255.65 260.87 L1258.66 223.86 L1261.68 219.75 L1264.83 220.43 L1267.98 214.54 L1271.00 217.01 L1274.01 249.90 L1280.18 213.58 L1283.33 211.80 L1286.49 259.22 L1292.52 206.73 L1295.67 243.73 L1298.68 219.06 L1301.84 250.18 L1304.99 211.52 L1311.02 208.51 L1314.17 257.44 L1317.32 254.70 L1320.34 208.51 L1323.36 210.84 L1326.51 235.92 L1329.52 209.47 L1332.47 249.90 L1335.48 226.60 L1338.50 217.28 L1341.65 243.73 L1344.80 238.94 L1347.82 250.18 L1353.99 235.51 L1357.00 217.28 L1360.15 258.81 L1366.32 227.29 L1369.47 217.28 L1372.49 232.08 L1375.64 239.62 L1381.81 257.44 L1384.82 223.17 L1387.84 205.36 L1390.99 262.24 L1394.01 234.14 L1397.16 245.52 L1400.18 251.00 L1403.33 219.06 L1406.34 264.98 L1409.22 217.28 L1412.24 264.98 L1415.25 242.36 L1418.40 237.84 L1421.56 209.47 L1424.57 249.90 L1427.59 245.52 L1430.74 205.36 L1433.89 254.01 L1436.91 249.90 L1440.33 242.36 L1443.08 214.27 L1446.23 251.00 L1452.26 212.62 L1455.41 251.00 L1461.58 208.51 L1464.73 220.84 L1467.75 251.00 L1470.76 205.36 L1476.93 233.45 L1480.08 235.51 L1483.23 227.97 L1486.25 209.47 L1489.27 224.96 L1492.42 223.59 L1498.59 233.73 L1501.60 236.20 L1504.75 265.66 L1510.92 243.73 L1513.94 263.61 L1517.09 241.95 L1520.10 249.90 L1523.26 219.06 L1526.27 243.73 L1529.42 221.80 L1532.44 227.29 L1535.59 246.47 L1538.61 224.96 L1541.76 252.64 L1544.91 219.06 L1547.93 211.52 L1554.10 252.64 L1557.25 262.24 L1560.26 237.57 L1563.28 244.69 L1566.43 246.47 L1572.60 238.94 L1578.77 246.47 L1581.51 238.94 L1584.66 245.79 L1587.51 266.62 L1590.59 263.82 L1593.66 215.62 L1596.87 224.71 L1600.09 251.25 L1602.88 260.33 L1605.96 223.31 L1609.03 228.20 L1612.24 247.06 L1615.46 239.37 L1618.53 248.45 L1621.60 237.98 L1624.82 212.83 L1627.61 219.82 L1633.90 251.95 L1636.97 256.14 L1640.18 229.59 L1642.98 263.82 L1646.19 217.44 L1649.26 228.20 L1652.34 215.62 L1655.13 257.54 L1658.34 235.88 L1661.56 259.35 L1664.63 257.54 L1667.70 215.62 L1670.92 240.35 L1673.71 233.09 L1676.93 247.06 L1680.00 252.65 L1683.07 249.15 L1685.87 206.54 L1689.08 220.51 L1692.29 249.85 L1695.37 214.23 L1698.16 224.98 L1701.23 209.62 L1704.45 221.91 L1707.66 215.62 L1710.73 215.62 L1713.81 258.93 L1717.02 218.84 L1719.81 261.73 L1726.10 217.72 L1729.17 259.35 L1732.39 265.22 L1735.18 206.54 L1741.19 260.75 L1744.26 220.51 L1747.75 234.48 L1750.97 238.68 L1754.04 229.59 L1759.91 262.15 L1763.12 211.43 L1766.34 248.45 L1769.41 256.14 L1772.48 251.25 L1775.28 232.81 L1778.49 242.17 L1781.70 223.59 L1784.78 238.68 L1787.85 238.96 L1791.06 240.77 L1793.86 205.15 L1797.07 207.94 L1800.14 207.24 L1802.94 263.82 L1806.01 219.12 L1809.22 250.55 L1812.02 205.85 L1815.23 221.91 L1818.31 214.23 L1821.38 247.06 L1824.59 219.12 L1827.39 246.78 L1830.60 238.68 L1833.67 248.45 L1836.75 205.85 L1839.54 233.09 L1843.17 228.20 L1845.97 208.64" fill="none" stroke="#7eb26d" stroke-width="2" stroke-linejoin="miter" stroke-miterlimit="3"/>
<rect x="512.5" y="333.7" width="10.5" height="2.8" fill="#7eb26d"/>
<text x="527.5" y="338.7" font-size="12" fill="#e0e1e2" stroke="#e0e1e2" stroke-width="0.3">12.0.0.214[计算服务器3]</text>
<text x="665.3" y="338.7" font-size="12" fill="#e0e1e2" stroke="#e0e1e2" stroke-width="0.3">最小值: 6%</text>
<text x="730.4" y="338.7" font-size="12" fill="#e0e1e2" stroke="#e0e1e2" stroke-width="0.3">最大值: 70%</text>
<text x="802.8" y="338.7" font-size="12" fill="#e0e1e2" stroke="#e0e1e2" stroke-width="0.3">平均值: 32%</text>
<line x1="520" y1="545.50" x2="1848.5" y2="545.50" stroke="#555555" stroke-width="1"/>
<text x="504.5" y="548.90" text-anchor="end" font-size="12.5" fill="#d8d9da" stroke="#d8d9da" stroke-width="0.2">0</text>
<line x1="520" y1="507.50" x2="1848.5" y2="507.50" stroke="#555555" stroke-width="1"/>
<text x="504.5" y="511.65" text-anchor="end" font-size="12.5" fill="#d8d9da" stroke="#d8d9da" stroke-width="0.2">20</text>
<line x1="520" y1="470.50" x2="1848.5" y2="470.50" stroke="#555555" stroke-width="1"/>
<text x="504.5" y="474.40" text-anchor="end" font-size="12.5" fill="#d8d9da" stroke="#d8d9da" stroke-width="0.2">40</text>
<line x1="520" y1="433.50" x2="1848.5" y2="433.50" stroke="#555555" stroke-width="1"/>
<text x="504.5" y="437.15" text-anchor="end" font-size="12.5" fill="#d8d9da" stroke="#d8d9da" stroke-width="0.2">60</text>
<line x1="520" y1="396.50" x2="1848.5" y2="396.50" stroke="#555555" stroke-width="1"/>
<text x="504.5" y="399.90" text-anchor="end" font-size="12.5" fill="#d8d9da" stroke="#d8d9da" stroke-width="0.2">80</text>
<line x1="577.50" y1="396.00" x2="577.50" y2="546.00" stroke="#555555" stroke-width="1"/>
<text x="577.60" y="563" text-anchor="middle" font-size="12.3" fill="#d8d9da" stroke="#d8d9da" stroke-width="0.2">9/10 20:00</text>
<line x1="651.50" y1="396.00" x2="651.50" y2="546.00" stroke="#555555" stroke-width="1"/>
<text x="651.39" y="563" text-anchor="middle" font-size="12.3" fill="#d8d9da" stroke="#d8d9da" stroke-width="0.2">9/11 00:00</text>
<line x1="725.50" y1="396.00" x2="725.50" y2="546.00" stroke="#555555" stroke-width="1"/>
<text x="725.18" y="563" text-anchor="middle" font-size="12.3" fill="#d8d9da" stroke="#d8d9da" stroke-width="0.2">9/11 04:00</text>
<line x1="798.50" y1="396.00" x2="798.50" y2="546.00" stroke="#555555" stroke-width="1"/>
<text x="798.97" y="563" text-anchor="middle" font-size="12.3" fill="#d8d9da" stroke="#d8d9da" stroke-width="0.2">9/11 08:00</text>
<line x1="872.50" y1="396.00" x2="872.50" y2="546.00" stroke="#555555" stroke-width="1"/>
<text x="872.76" y="563" text-anchor="middle" font-size="12.3" fill="#d8d9da" stroke="#d8d9da" stroke-width="0.2">9/11 12:00</text>
<line x1="946.50" y1="396.00" x2="946.50" y2="546.00" stroke="#555555" stroke-width="1"/>
<text x="946.55" y="563" text-anchor="middle" font-size="12.3" fill="#d8d9da" stroke="#d8d9da" stroke-width="0.2">9/11 16:00</text>
<line x1="1020.50" y1="396.00" x2="1020.50" y2="546.00" stroke="#555555" stroke-width="1"/>
<text x="1020.34" y="563" text-anchor="middle" font-size="12.3" fill="#d8d9da" stroke="#d8d9da" stroke-width="0.2">9/11 20:00</text>
<line x1="1094.50" y1="396.00" x2="1094.50" y2="546.00" stroke="#555555" stroke-width="1"/>
<text x="1094.13" y="563" text-anchor="middle" font-size="12.3" fill="#d8d9da" stroke="#d8d9da" stroke-width="0.2">9/12 00:00</text>
<line x1="1167.50" y1="396.00" x2="1167.50" y2="546.00" stroke="#555555" stroke-width="1"/>
<text x="1167.92" y="563" text-anchor="middle" font-size="12.3" fill="#d8d9da" stroke="#d8d9da" stroke-width="0.2">9/12 04:00</text>
<line x1="1241.50" y1="396.00" x2="1241.50" y2="546.00" stroke="#555555" stroke-width="1"/>
<text x="1241.71" y="563" text-anchor="middle" font-size="12.3" fill="#d8d9da" stroke="#d8d9da" stroke-width="0.2">9/12 08:00</text>
<line x1="1315.50" y1="396.00" x2="1315.50" y2="546.00" stroke="#555555" stroke-width="1"/>
<text x="1315.50" y="563" text-anchor="middle" font-size="12.3" fill="#d8d9da" stroke="#d8d9da" stroke-width="0.2">9/12 12:00</text>
<line x1="1389.50" y1="396.00" x2="1389.50" y2="546.00" stroke="#555555" stroke-width="1"/>
<text x="1389.29" y="563" text-anchor="middle" font-size="12.3" fill="#d8d9da" stroke="#d8d9da" stroke-width="0.2">9/12 16:00</text>
<line x1="1463.50" y1="396.00" x2="1463.50" y2="546.00" stroke="#555555" stroke-width="1"/>
<text x="1463.08" y="563" text-anchor="middle" font-size="12.3" fill="#d8d9da" stroke="#d8d9da" stroke-width="0.2">9/12 20:00</text>
<line x1="1536.50" y1="396.00" x2="1536.50" y2="546.00" stroke="#555555" stroke-width="1"/>
<text x="1536.87" y="563" text-anchor="middle" font-size="12.3" fill="#d8d9da" stroke="#d8d9da" stroke-width="0.2">9/13 00:00</text>
<line x1="1610.50" y1="396.00" x2="1610.50" y2="546.00" stroke="#555555" stroke-width="1"/>
<text x="1610.66" y="563" text-anchor="middle" font-size="12.3" fill="#d8d9da" stroke="#d8d9da" stroke-width="0.2">9/13 04:00</text>
<line x1="1684.50" y1="396.00" x2="1684.50" y2="546.00" stroke="#555555" stroke-width="1"/>
<text x="1684.45" y="563" text-anchor="middle" font-size="12.3" fill="#d8d9da" stroke="#d8d9da" stroke-width="0.2">9/13 08:00</text>
<line x1="1758.50" y1="396.00" x2="1758.50" y2="546.00" stroke="#555555" stroke-width="1"/>
<text x="1758.24" y="563" text-anchor="middle" font-size="12.3" fill="#d8d9da" stroke="#d8d9da" stroke-width="0.2">9/13 12:00</text>
<line x1="1832.50" y1="396.00" x2="1832.50" y2="546.00" stroke="#555555" stroke-width="1"/>
<text x="1832.03" y="563" text-anchor="middle" font-size="12.3" fill="#d8d9da" stroke="#d8d9da" stroke-width="0.2">9/13 16:00</text>
<path d="M520.00 534.03 L836.50 534.03 L837.00 428.86 L837.96 427.02 L838.90 435.88 L840.18 439.75 L841.10 441.98 L842.34 427.06 L843.57 447.40 L844.94 429.35 L846.26 448.95 L847.33 426.63 L848.52 452.08 L849.91 424.83 L850.87 448.26 L852.16 420.20 L853.27 425.70 L854.63 447.64 L855.80 418.84 L856.94 442.36 L857.94 431.17 L858.84 442.99 L860.05 426.38 L861.18 442.89 L862.67 432.83 L863.66 440.49 L864.65 434.00 L865.85 446.69 L866.95 433.49 L868.42 452.08 L869.71 434.12 L870.74 452.08 L872.23 452.08 L873.25 451.32 L874.27 416.72 L875.74 430.47 L876.93 445.96 L878.22 419.70 L879.40 448.55 L880.55 425.20 L881.80 450.85 L883.09 438.36 L884.43 431.22 L885.46 420.44 L886.68 442.04 L888.07 428.31 L889.29 436.16 L890.28 431.37 L891.49 446.63 L892.50 432.46 L893.95 450.77 L895.02 429.42 L896.44 444.19 L897.42 438.23 L898.45 417.20 L899.57 451.27 L900.71 441.33 L902.21 431.05 L903.12 448.31 L904.20 426.90 L905.16 427.98 L906.55 450.74 L908.00 429.41 L909.01 443.87 L909.96 443.33 L911.46 429.78 L912.50 437.14 L913.78 449.39 L914.89 422.38 L916.37 448.53 L917.53 447.62 L918.56 413.34 L919.71 436.49 L921.13 423.51 L922.44 421.03 L923.50 445.14 L924.42 420.79 L925.60 436.03 L926.99 416.18 L928.03 448.22 L929.40 445.93 L930.74 413.34 L932.08 445.97 L933.47 413.34 L934.78 437.94 L935.91 441.64 L937.10 413.34 L938.06 424.87 L939.10 420.82 L940.23 449.39 L941.25 414.04 L942.49 445.21 L943.52 416.36 L944.49 441.59 L945.66 413.84 L947.11 444.32 L948.59 429.60 L949.62 441.07 L950.93 448.14 L952.34 430.67 L953.35 430.54 L954.85 443.84 L955.92 434.47 L956.98 422.49 L958.37 413.34 L959.32 440.43 L960.39 413.58 L961.46 446.84 L962.54 424.87 L963.74 444.21 L964.91 439.94 L966.00 425.50 L967.15 443.19 L968.35 413.34 L969.76 439.96 L970.92 425.18 L972.25 437.83 L973.71 415.93 L974.67 446.84 L976.08 420.90 L977.12 438.28 L978.34 413.78 L979.59 434.78 L981.08 426.46 L982.13 448.88 L983.14 422.55 L984.60 439.30 L985.74 429.93 L987.22 436.53 L988.65 430.15 L990.10 435.56 L991.58 425.69 L992.91 438.27 L993.92 422.82 L995.32 443.77 L996.43 425.76 L997.80 446.88 L998.92 425.36 L1000.07 442.92 L1001.45 423.23 L1002.51 448.56 L1003.97 418.10 L1004.90 426.07 L1006.04 422.32 L1007.42 452.08 L1008.83 417.43 L1010.19 445.42 L1011.18 421.93 L1012.14 439.21 L1013.32 417.29 L1014.69 443.90 L1015.70 420.64 L1016.64 449.26 L1017.94 442.40 L1019.38 435.34 L1020.78 429.95 L1021.84 445.53 L1022.95 422.27 L1024.29 450.31 L1025.30 415.39 L1026.44 446.85 L1027.44 422.47 L1028.37 442.17 L1029.87 439.76 L1031.03 447.56 L1032.21 452.08 L1033.34 442.38 L1034.41 418.76 L1035.79 444.79 L1036.98 452.01 L1038.37 421.29 L1039.39 449.27 L1040.51 434.89 L1041.74 445.50 L1042.92 421.92 L1044.07 444.85 L1045.57 425.58 L1046.95 429.70 L1048.12 443.41 L1049.20 445.90 L1050.58 420.39 L1051.59 427.87 L1052.92 452.08 L1054.36 423.81 L1055.55 421.66 L1056.56 452.08 L1057.93 421.95 L1059.10 419.88 L1060.38 418.36 L1061.50 447.30 L1062.57 452.08 L1064.01 449.85 L1065.17 428.24 L1066.10 447.84 L1067.13 420.71 L1068.13 417.36 L1069.41 449.98 L1070.34 450.55 L1071.81 426.63 L1072.72 437.30 L1073.95 421.19 L1075.24 439.37 L1076.17 426.08 L1077.33 443.43 L1078.30 420.64 L1079.76 418.08 L1081.13 441.15 L1082.34 432.42 L1083.69 431.39 L1085.10 452.08 L1086.50 420.57 L1087.93 452.08 L1088.92 444.37 L1090.24 437.68 L1091.58 420.83 L1092.52 426.88 L1093.54 452.08 L1094.89 422.23 L1095.99 442.02 L1097.34 417.87 L1098.61 431.40 L1099.93 438.91 L1101.01 427.55 L1102.20 448.61 L1103.68 426.06 L1104.71 413.49 L1106.03 445.51 L1107.47 442.83 L1108.53 415.72 L1109.70 448.39 L1110.95 414.65 L1111.95 435.04 L1113.24 416.16 L1114.51 413.34 L1115.51 450.08 L1116.50 436.65 L1117.84 424.91 L1119.28 437.79 L1120.48 417.89 L1121.38 448.26 L1122.53 413.34 L1123.94 445.69 L1125.26 416.44 L1126.31 444.09 L1127.61 423.44 L1128.80 441.13 L1130.28 420.89 L1131.61 451.28 L1132.95 419.60 L1133.92 443.95 L1134.86 415.51 L1135.92 452.08 L1137.42 441.46 L1138.70 437.67 L1139.98 415.57 L1141.27 439.60 L1142.40 427.96 L1143.78 416.66 L1145.06 442.63 L1146.45 414.60 L1147.36 448.69 L1148.61 422.10 L1149.75 435.94 L1151.19 416.81 L1152.14 437.79 L1153.18 416.58 L1154.50 413.34 L1155.90 443.09 L1157.05 413.34 L1157.96 431.59 L1159.16 413.34 L1160.11 448.01 L1161.14 417.56 L1162.54 443.71 L1163.56 417.27 L1164.81 442.11 L1165.95 424.76 L1167.41 449.87 L1168.68 415.04 L1169.60 444.88 L1170.52 414.73 L1171.50 428.56 L1172.60 438.16 L1173.81 418.37 L1174.98 417.12 L1176.16 429.19 L1177.44 429.38 L1178.41 445.15 L1179.42 432.55 L1180.37 450.29 L1181.31 452.08 L1182.25 450.69 L1183.34 426.19 L1184.72 449.78 L1186.09 424.57 L1187.03 450.29 L1188.36 452.08 L1189.79 429.99 L1190.86 419.39 L1192.22 421.79 L1193.71 447.61 L1194.66 420.85 L1195.70 427.35 L1196.95 417.36 L1198.31 413.89 L1199.52 445.36 L1200.76 428.73 L1202.26 437.91 L1203.52 428.87 L1204.94 447.43 L1206.41 417.01 L1207.51 424.52 L1208.94 439.36 L1210.22 449.74 L1211.50 419.80 L1212.63 419.55 L1213.56 427.57 L1214.89 442.41 L1215.79 420.19 L1216.76 446.61 L1217.92 418.95 L1218.94 450.12 L1220.37 449.70 L1221.65 448.77 L1222.77 422.05 L1223.75 446.22 L1225.00 433.93 L1226.44 449.79 L1227.67 446.87 L1228.73 427.94 L1229.67 430.70 L1230.87 452.08 L1231.99 435.51 L1232.99 445.09 L1234.43 444.49 L1235.75 428.94 L1236.96 452.08 L1238.37 423.18 L1239.67 439.48 L1240.79 427.95 L1241.73 425.01 L1243.16 440.99 L1244.35 440.24 L1245.31 420.27 L1246.22 431.60 L1247.51 423.87 L1248.84 418.06 L1249.80 436.52 L1250.79 439.83 L1251.92 450.52 L1252.85 452.08 L1254.34 415.02 L1255.55 451.79 L1256.46 431.32 L1257.37 452.08 L1258.76 422.83 L1260.21 441.07 L1261.26 422.45 L1262.37 452.08 L1263.32 450.36 L1264.40 430.36 L1265.47 450.61 L1266.79 421.96 L1267.71 419.36 L1269.17 452.08 L1270.24 426.48 L1271.50 450.47 L1272.86 429.82 L1274.16 445.12 L1275.37 450.97 L1276.65 428.38 L1278.01 452.08 L1279.42 419.83 L1280.49 449.97 L1281.58 416.60 L1282.81 440.97 L1284.26 415.75 L1285.41 443.84 L1286.49 442.80 L1287.70 416.96 L1288.88 439.32 L1290.02 416.93 L1291.18 444.87 L1292.14 418.75 L1293.10 448.93 L1294.26 445.88 L1295.40 441.99 L1296.68 441.79 L1297.92 421.02 L1298.93 443.39 L1300.14 432.75 L1301.50 417.19 L1302.68 447.34 L1303.77 418.89 L1305.19 443.51 L1306.12 416.78 L1307.16 434.48 L1308.60 420.42 L1309.54 416.46 L1310.97 437.21 L1312.10 414.63 L1313.32 436.87 L1314.76 420.54 L1315.69 445.04 L1316.70 416.23 L1318.09 421.13 L1319.33 445.28 L1320.80 418.33 L1321.94 450.50 L1323.17 417.43 L1324.16 434.01 L1325.45 417.26 L1326.47 445.47 L1327.58 414.35 L1328.56 413.65 L1330.00 446.14 L1331.28 413.34 L1332.58 444.52 L1333.93 413.34 L1335.17 414.57 L1336.63 432.30 L1337.88 436.54 L1338.91 417.46 L1340.41 439.34 L1341.56 447.52 L1342.77 422.66 L1343.78 438.65 L1345.26 423.33 L1346.37 442.63 L1347.67 420.34 L1348.96 448.62 L1350.06 423.25 L1351.05 440.67 L1352.12 422.11 L1353.09 450.41 L1354.21 424.33 L1355.54 446.77 L1356.73 441.11 L1358.01 424.97 L1359.35 446.04 L1360.64 421.74 L1361.98 425.24 L1362.96 443.63 L1364.20 428.54 L1365.40 421.22 L1366.39 444.23 L1367.31 430.11 L1368.58 443.30 L1369.79 419.90 L1370.79 423.86 L1372.03 448.45 L1373.48 452.08 L1374.86 417.22 L1376.33 448.97 L1377.62 416.02 L1378.91 448.93 L1380.08 429.91 L1381.04 445.66 L1382.37 417.26 L1383.58 439.64 L1384.56 438.97 L1386.03 415.80 L1387.51 445.88 L1388.55 428.89 L1389.52 436.52 L1390.97 424.55 L1392.32 420.74 L1393.79 441.73 L1394.88 428.42 L1395.90 440.25 L1397.09 425.07 L1398.39 422.29 L1399.45 443.84 L1400.88 423.65 L1402.01 446.05 L1403.49 425.72 L1404.74 428.13 L1405.92 448.66 L1406.83 432.55 L1407.82 446.12 L1409.04 426.56 L1409.99 434.75 L1411.06 452.08 L1412.54 433.62 L1413.77 446.03 L1415.14 452.08 L1416.16 422.58 L1417.25 445.50 L1418.49 430.24 L1419.44 450.71 L1420.75 452.08 L1421.82 443.82 L1422.73 423.39 L1424.02 415.33 L1424.96 443.16 L1426.18 426.50 L1427.60 447.43 L1429.02 425.81 L1430.16 416.82 L1431.65 448.13 L1432.57 420.36 L1433.72 417.30 L1434.96 419.24 L1436.33 449.70 L1437.45 420.14 L1438.74 441.40 L1440.23 421.62 L1441.46 437.32 L1442.88 450.48 L1443.93 421.48 L1445.06 423.27 L1446.00 441.52 L1447.13 426.41 L1448.04 445.31 L1449.33 422.13 L1450.51 444.27 L1451.58 439.86 L1452.85 426.58 L1454.19 419.47 L1455.69 431.42 L1456.77 446.78 L1457.72 417.56 L1458.64 431.52 L1459.90 441.02 L1460.99 443.03 L1461.89 417.32 L1462.86 447.11 L1464.27 445.53 L1465.33 425.40 L1466.80 443.92 L1468.03 413.34 L1469.18 443.74 L1470.56 444.95 L1471.62 437.63 L1472.57 423.11 L1473.66 444.75 L1475.01 417.17 L1476.29 441.75 L1477.35 441.74 L1478.80 413.34 L1480.06 441.44 L1481.08 426.51 L1482.26 423.02 L1483.37 444.71 L1484.33 413.38 L1485.40 442.15 L1486.78 421.02 L1488.07 443.68 L1489.10 417.74 L1490.55 446.14 L1491.96 413.34 L1493.41 443.14 L1494.57 445.12 L1495.84 422.81 L1496.94 446.84 L1498.40 420.14 L1499.58 440.54 L1500.77 415.08 L1502.00 443.26 L1502.97 429.00 L1504.38 435.90 L1505.57 417.26 L1506.71 434.42 L1507.62 421.53 L1508.91 451.25 L1510.00 415.21 L1510.98 451.27 L1512.23 418.10 L1513.16 445.92 L1514.08 434.23 L1515.33 435.71 L1516.49 423.60 L1517.69 428.04 L1519.00 436.70 L1520.45 426.23 L1521.60 413.34 L1523.02 438.43 L1524.06 423.30 L1525.11 449.53 L1526.25 431.76 L1527.56 420.71 L1528.53 449.77 L1529.75 441.59 L1531.19 444.60 L1532.15 427.97 L1533.23 437.39 L1534.52 433.85 L1535.64 413.34 L1536.60 448.58 L1537.52 420.57 L1538.63 437.67 L1539.59 418.67 L1540.54 449.43 L1541.64 420.16 L1542.66 439.11 L1543.88 430.90 L1545.25 440.95 L1546.31 423.18 L1547.28 448.60 L1548.22 431.56 L1549.58 446.19 L1550.59 431.14 L1551.64 450.40 L1552.66 426.57 L1554.04 429.78 L1555.32 449.51 L1556.65 414.73 L1557.85 438.52 L1559.25 419.27 L1560.67 450.39 L1562.15 426.30 L1563.40 450.38 L1564.33 445.59 L1565.48 448.35 L1566.92 419.53 L1567.89 445.59 L1569.11 430.97 L1570.07 448.76 L1571.11 430.06 L1572.21 448.08 L1573.69 452.08 L1575.09 431.01 L1576.13 452.08 L1577.36 421.40 L1578.31 447.25 L1579.64 428.22 L1580.83 423.84 L1581.96 448.47 L1582.88 427.16 L1584.13 451.33 L1585.62 430.37 L1587.11 452.08 L1588.60 423.39 L1589.52 443.57 L1590.87 426.99 L1592.23 422.85 L1593.33 446.76 L1594.70 418.30 L1596.10 444.62 L1597.33 431.10 L1598.44 451.59 L1599.61 424.12 L1601.08 449.02 L1602.34 420.11 L1603.35 452.08 L1604.81 424.93 L1605.82 451.94 L1606.89 439.05 L1608.31 420.26 L1609.68 441.75 L1611.03 414.94 L1612.49 416.97 L1613.92 450.72 L1614.95 430.24 L1616.27 436.03 L1617.63 413.34 L1619.01 435.67 L1620.48 420.23 L1621.50 441.73 L1622.51 419.04 L1623.46 445.62 L1624.88 417.56 L1625.93 449.35 L1627.20 437.64 L1628.22 427.18 L1629.56 444.45 L1631.03 426.26 L1632.18 452.08 L1633.30 420.75 L1634.64 446.83 L1635.60 426.26 L1636.55 439.84 L1637.77 449.92 L1639.21 417.36 L1640.55 438.30 L1641.58 428.87 L1642.50 448.35 L1643.74 429.37 L1645.18 439.03 L1646.35 451.72 L1647.59 420.86 L1648.92 447.88 L1649.89 427.27 L1651.13 450.47 L1652.08 422.96 L1653.55 443.19 L1655.00 427.32 L1656.43 446.83 L1657.39 422.75 L1658.31 446.66 L1659.69 421.92 L1660.99 442.70 L1662.17 444.37 L1663.44 432.08 L1664.85 420.97 L1665.92 435.13 L1666.87 413.34 L1668.36 442.94 L1669.31 413.34 L1670.72 447.43 L1672.04 419.61 L1673.04 448.65 L1674.44 421.66 L1675.66 444.73 L1677.02 427.85 L1678.42 446.36 L1679.59 428.54 L1680.74 423.48 L1681.77 449.64 L1683.26 414.86 L1684.33 427.72 L1685.36 449.68 L1686.30 420.61 L1687.21 441.52 L1688.42 424.00 L1689.55 439.34 L1690.73 436.39 L1691.76 427.49 L1692.71 446.64 L1693.70 416.86 L1694.95 433.67 L1696.06 445.72 L1697.18 425.10 L1698.31 438.18 L1699.72 426.67 L1701.02 440.17 L1701.98 416.99 L1702.99 433.39 L1704.15 417.97 L1705.50 446.77 L1706.97 419.44 L1707.92 445.06 L1709.30 421.15 L1710.62 445.77 L1711.83 413.34 L1713.19 439.35 L1714.66 445.31 L1715.70 424.68 L1716.77 414.50 L1718.23 446.85 L1719.42 426.53 L1720.45 442.27 L1721.93 425.27 L1722.85 438.02 L1724.23 421.06 L1725.28 436.89 L1726.26 450.27 L1727.51 415.26 L1728.50 442.33 L1729.95 427.52 L1730.96 443.57 L1732.25 448.87 L1733.56 422.20 L1734.99 444.96 L1736.14 416.61 L1737.42 440.72 L1738.52 417.10 L1739.89 431.45 L1741.03 449.51 L1742.33 427.10 L1743.30 417.60 L1744.55 448.79 L1745.64 426.22 L1746.61 440.54 L1747.93 424.17 L1748.93 451.08 L1750.37 427.30 L1751.27 436.71 L1752.71 425.83 L1754.19 422.39 L1755.54 444.87 L1756.49 420.19 L1757.70 436.91 L1759.10 423.51 L1760.48 447.52 L1761.66 420.46 L1762.64 447.31 L1763.99 429.91 L1765.33 452.08 L1766.34 417.72 L1767.28 452.08 L1768.66 441.00 L1769.75 433.06 L1771.17 425.14 L1772.60 444.67 L1773.54 424.31 L1774.71 452.08 L1775.88 429.29 L1776.83 452.08 L1778.01 426.28 L1779.17 450.09 L1780.24 430.36 L1781.63 449.74 L1782.79 424.11 L1783.85 452.08 L1784.86 429.19 L1785.83 449.02 L1786.88 432.79 L1788.15 417.12 L1789.30 443.84 L1790.36 433.39 L1791.75 423.61 L1792.82 452.08 L1794.06 425.87 L1795.39 420.68 L1796.56 451.80 L1797.66 441.94 L1799.14 452.08 L1800.60 438.84 L1801.72 431.09 L1802.66 449.15 L1803.75 416.32 L1805.19 452.08 L1806.45 451.11 L1807.88 424.05 L1809.17 419.24 L1810.33 446.23 L1811.54 415.82 L1812.57 416.02 L1813.52 452.08 L1814.53 428.93 L1815.66 443.07 L1816.89 442.68 L1817.80 429.63 L1819.26 441.35 L1820.52 420.25 L1821.46 442.95 L1822.50 422.46 L1823.92 450.64 L1825.25 431.05 L1826.15 452.08 L1827.13 419.98 L1828.47 444.24 L1829.55 430.88 L1830.52 452.08 L1831.99 427.82 L1833.03 437.33 L1834.19 427.96 L1835.59 439.89 L1836.86 419.61 L1838.16 448.70 L1839.57 416.67 L1840.56 424.48 L1841.94 419.06 L1843.15 443.47 L1844.34 417.93 L1845.72 431.92 L1845.72 545.20 L520.00 545.20 Z" fill="rgba(126,178,109,0.1)"/>
<path d="M520.00 534.03 L836.50 534.03 L837.00 428.86 L837.96 427.02 L838.90 435.88 L840.18 439.75 L841.10 441.98 L842.34 427.06 L843.57 447.40 L844.94 429.35 L846.26 448.95 L847.33 426.63 L848.52 452.08 L849.91 424.83 L850.87 448.26 L852.16 420.20 L853.27 425.70 L854.63 447.64 L855.80 418.84 L856.94 442.36 L857.94 431.17 L858.84 442.99 L860.05 426.38 L861.18 442.89 L862.67 432.83 L863.66 440.49 L864.65 434.00 L865.85 446.69 L866.95 433.49 L868.42 452.08 L869.71 434.12 L870.74 452.08 L872.23 452.08 L873.25 451.32 L874.27 416.72 L875.74 430.47 L876.93 445.96 L878.22 419.70 L879.40 448.55 L880.55 425.20 L881.80 450.85 L883.09 438.36 L884.43 431.22 L885.46 420.44 L886.68 442.04 L888.07 428.31 L889.29 436.16 L890.28 431.37 L891.49 446.63 L892.50 432.46 L893.95 450.77 L895.02 429.42 L896.44 444.19 L897.42 438.23 L898.45 417.20 L899.57 451.27 L900.71 441.33 L902.21 431.05 L903.12 448.31 L904.20 426.90 L905.16 427.98 L906.55 450.74 L908.00 429.41 L909.01 443.87 L909.96 443.33 L911.46 429.78 L912.50 437.14 L913.78 449.39 L914.89 422.38 L916.37 448.53 L917.53 447.62 L918.56 413.34 L919.71 436.49 L921.13 423.51 L922.44 421.03 L923.50 445.14 L924.42 420.79 L925.60 436.03 L926.99 416.18 L928.03 448.22 L929.40 445.93 L930.74 413.34 L932.08 445.97 L933.47 413.34 L934.78 437.94 L935.91 441.64 L937.10 413.34 L938.06 424.87 L939.10 420.82 L940.23 449.39 L941.25 414.04 L942.49 445.21 L943.52 416.36 L944.49 441.59 L945.66 413.84 L947.11 444.32 L948.59 429.60 L949.62 441.07 L950.93 448.14 L952.34 430.67 L953.35 430.54 L954.85 443.84 L955.92 434.47 L956.98 422.49 L958.37 413.34 L959.32 440.43 L960.39 413.58 L961.46 446.84 L962.54 424.87 L963.74 444.21 L964.91 439.94 L966.00 425.50 L967.15 443.19 L968.35 413.34 L969.76 439.96 L970.92 425.18 L972.25 437.83 L973.71 415.93 L974.67 446.84 L976.08 420.90 L977.12 438.28 L978.34 413.78 L979.59 434.78 L981.08 426.46 L982.13 448.88 L983.14 422.55 L984.60 439.30 L985.74 429.93 L987.22 436.53 L988.65 430.15 L990.10 435.56 L991.58 425.69 L992.91 438.27 L993.92 422.82 L995.32 443.77 L996.43 425.76 L997.80 446.88 L998.92 425.36 L1000.07 442.92 L1001.45 423.23 L1002.51 448.56 L1003.97 418.10 L1004.90 426.07 L1006.04 422.32 L1007.42 452.08 L1008.83 417.43 L1010.19 445.42 L1011.18 421.93 L1012.14 439.21 L1013.32 417.29 L1014.69 443.90 L1015.70 420.64 L1016.64 449.26 L1017.94 442.40 L1019.38 435.34 L1020.78 429.95 L1021.84 445.53 L1022.95 422.27 L1024.29 450.31 L1025.30 415.39 L1026.44 446.85 L1027.44 422.47 L1028.37 442.17 L1029.87 439.76 L1031.03 447.56 L1032.21 452.08 L1033.34 442.38 L1034.41 418.76 L1035.79 444.79 L1036.98 452.01 L1038.37 421.29 L1039.39 449.27 L1040.51 434.89 L1041.74 445.50 L1042.92 421.92 L1044.07 444.85 L1045.57 425.58 L1046.95 429.70 L1048.12 443.41 L1049.20 445.90 L1050.58 420.39 L1051.59 427.87 L1052.92 452.08 L1054.36 423.81 L1055.55 421.66 L1056.56 452.08 L1057.93 421.95 L1059.10 419.88 L1060.38 418.36 L1061.50 447.30 L1062.57 452.08 L1064.01 449.85 L1065.17 428.24 L1066.10 447.84 L1067.13 420.71 L1068.13 417.36 L1069.41 449.98 L1070.34 450.55 L1071.81 426.63 L1072.72 437.30 L1073.95 421.19 L1075.24 439.37 L1076.17 426.08 L1077.33 443.43 L1078.30 420.64 L1079.76 418.08 L1081.13 441.15 L1082.34 432.42 L1083.69 431.39 L1085.10 452.08 L1086.50 420.57 L1087.93 452.08 L1088.92 444.37 L1090.24 437.68 L1091.58 420.83 L1092.52 426.88 L1093.54 452.08 L1094.89 422.23 L1095.99 442.02 L1097.34 417.87 L1098.61 431.40 L1099.93 438.91 L1101.01 427.55 L1102.20 448.61 L1103.68 426.06 L1104.71 413.49 L1106.03 445.51 L1107.47 442.83 L1108.53 415.72 L1109.70 448.39 L1110.95 414.65 L1111.95 435.04 L1113.24 416.16 L1114.51 413.34 L1115.51 450.08 L1116.50 436.65 L1117.84 424.91 L1119.28 437.79 L1120.48 417.89 L1121.38 448.26 L1122.53 413.34 L1123.94 445.69 L1125.26 416.44 L1126.31 444.09 L1127.61 423.44 L1128.80 441.13 L1130.28 420.89 L1131.61 451.28 L1132.95 419.60 L1133.92 443.95 L1134.86 415.51 L1135.92 452.08 L1137.42 441.46 L1138.70 437.67 L1139.98 415.57 L1141.27 439.60 L1142.40 427.96 L1143.78 416.66 L1145.06 442.63 L1146.45 414.60 L1147.36 448.69 L1148.61 422.10 L1149.75 435.94 L1151.19 416.81 L1152.14 437.79 L1153.18 416.58 L1154.50 413.34 L1155.90 443.09 L1157.05 413.34 L1157.96 431.59 L1159.16 413.34 L1160.11 448.01 L1161.14 417.56 L1162.54 443.71 L1163.56 417.27 L1164.81 442.11 L1165.95 424.76 L1167.41 449.87 L1168.68 415.04 L1169.60 444.88 L1170.52 414.73 L1171.50 428.56 L1172.60 438.16 L1173.81 418.37 L1174.98 417.12 L1176.16 429.19 L1177.44 429.38 L1178.41 445.15 L1179.42 432.55 L1180.37 450.29 L1181.31 452.08 L1182.25 450.69 L1183.34 426.19 L1184.72 449.78 L1186.09 424.57 L1187.03 450.29 L1188.36 452.08 L1189.79 429.99 L1190.86 419.39 L1192.22 421.79 L1193.71 447.61 L1194.66 420.85 L1195.70 427.35 L1196.95 417.36 L1198.31 413.89 L1199.52 445.36 L1200.76 428.73 L1202.26 437.91 L1203.52 428.87 L1204.94 447.43 L1206.41 417.01 L1207.51 424.52 L1208.94 439.36 L1210.22 449.74 L1211.50 419.80 L1212.63 419.55 L1213.56 427.57 L1214.89 442.41 L1215.79 420.19 L1216.76 446.61 L1217.92 418.95 L1218.94 450.12 L1220.37 449.70 L1221.65 448.77 L1222.77 422.05 L1223.75 446.22 L1225.00 433.93 L1226.44 449.79 L1227.67 446.87 L1228.73 427.94 L1229.67 430.70 L1230.87 452.08 L1231.99 435.51 L1232.99 445.09 L1234.43 444.49 L1235.75 428.94 L1236.96 452.08 L1238.37 423.18 L1239.67 439.48 L1240.79 427.95 L1241.73 425.01 L1243.16 440.99 L1244.35 440.24 L1245.31 420.27 L1246.22 431.60 L1247.51 423.87 L1248.84 418.06 L1249.80 436.52 L1250.79 439.83 L1251.92 450.52 L1252.85 452.08 L1254.34 415.02 L1255.55 451.79 L1256.46 431.32 L1257.37 452.08 L1258.76 422.83 L1260.21 441.07 L1261.26 422.45 L1262.37 452.08 L1263.32 450.36 L1264.40 430.36 L1265.47 450.61 L1266.79 421.96 L1267.71 419.36 L1269.17 452.08 L1270.24 426.48 L1271.50 450.47 L1272.86 429.82 L1274.16 445.12 L1275.37 450.97 L1276.65 428.38 L1278.01 452.08 L1279.42 419.83 L1280.49 449.97 L1281.58 416.60 L1282.81 440.97 L1284.26 415.75 L1285.41 443.84 L1286.49 442.80 L1287.70 416.96 L1288.88 439.32 L1290.02 416.93 L1291.18 444.87 L1292.14 418.75 L1293.10 448.93 L1294.26 445.88 L1295.40 441.99 L1296.68 441.79 L1297.92 421.02 L1298.93 443.39 L1300.14 432.75 L1301.50 417.19 L1302.68 447.34 L1303.77 418.89 L1305.19 443.51 L1306.12 416.78 L1307.16 434.48 L1308.60 420.42 L1309.54 416.46 L1310.97 437.21 L1312.10 414.63 L1313.32 436.87 L1314.76 420.54 L1315.69 445.04 L1316.70 416.23 L1318.09 421.13 L1319.33 445.28 L1320.80 418.33 L1321.94 450.50 L1323.17 417.43 L1324.16 434.01 L1325.45 417.26 L1326.47 445.47 L1327.58 414.35 L1328.56 413.65 L1330.00 446.14 L1331.28 413.34 L1332.58 444.52 L1333.93 413.34 L1335.17 414.57 L1336.63 432.30 L1337.88 436.54 L1338.91 417.46 L1340.41 439.34 L1341.56 447.52 L1342.77 422.66 L1343.78 438.65 L1345.26 423.33 L1346.37 442.63 L1347.67 420.34 L1348.96 448.62 L1350.06 423.25 L1351.05 440.67 L1352.12 422.11 L1353.09 450.41 L1354.21 424.33 L1355.54 446.77 L1356.73 441.11 L1358.01 424.97 L1359.35 446.04 L1360.64 421.74 L1361.98 425.24 L1362.96 443.63 L1364.20 428.54 L1365.40 421.22 L1366.39 444.23 L1367.31 430.11 L1368.58 443.30 L1369.79 419.90 L1370.79 423.86 L1372.03 448.45 L1373.48 452.08 L1374.86 417.22 L1376.33 448.97 L1377.62 416.02 L1378.91 448.93 L1380.08 429.91 L1381.04 445.66 L1382.37 417.26 L1383.58 439.64 L1384.56 438.97 L1386.03 415.80 L1387.51 445.88 L1388.55 428.89 L1389.52 436.52 L1390.97 424.55 L1392.32 420.74 L1393.79 441.73 L1394.88 428.42 L1395.90 440.25 L1397.09 425.07 L1398.39 422.29 L1399.45 443.84 L1400.88 423.65 L1402.01 446.05 L1403.49 425.72 L1404.74 428.13 L1405.92 448.66 L1406.83 432.55 L1407.82 446.12 L1409.04 426.56 L1409.99 434.75 L1411.06 452.08 L1412.54 433.62 L1413.77 446.03 L1415.14 452.08 L1416.16 422.58 L1417.25 445.50 L1418.49 430.24 L1419.44 450.71 L1420.75 452.08 L1421.82 443.82 L1422.73 423.39 L1424.02 415.33 L1424.96 443.16 L1426.18 426.50 L1427.60 447.43 L1429.02 425.81 L1430.16 416.82 L1431.65 448.13 L1432.57 420.36 L1433.72 417.30 L1434.96 419.24 L1436.33 449.70 L1437.45 420.14 L1438.74 441.40 L1440.23 421.62 L1441.46 437.32 L1442.88 450.48 L1443.93 421.48 L1445.06 423.27 L1446.00 441.52 L1447.13 426.41 L1448.04 445.31 L1449.33 422.13 L1450.51 444.27 L1451.58 439.86 L1452.85 426.58 L1454.19 419.47 L1455.69 431.42 L1456.77 446.78 L1457.72 417.56 L1458.64 431.52 L1459.90 441.02 L1460.99 443.03 L1461.89 417.32 L1462.86 447.11 L1464.27 445.53 L1465.33 425.40 L1466.80 443.92 L1468.03 413.34 L1469.18 443.74 L1470.56 444.95 L1471.62 437.63 L1472.57 423.11 L1473.66 444.75 L1475.01 417.17 L1476.29 441.75 L1477.35 441.74 L1478.80 413.34 L1480.06 441.44 L1481.08 426.51 L1482.26 423.02 L1483.37 444.71 L1484.33 413.38 L1485.40 442.15 L1486.78 421.02 L1488.07 443.68 L1489.10 417.74 L1490.55 446.14 L1491.96 413.34 L1493.41 443.14 L1494.57 445.12 L1495.84 422.81 L1496.94 446.84 L1498.40 420.14 L1499.58 440.54 L1500.77 415.08 L1502.00 443.26 L1502.97 429.00 L1504.38 435.90 L1505.57 417.26 L1506.71 434.42 L1507.62 421.53 L1508.91 451.25 L1510.00 415.21 L1510.98 451.27 L1512.23 418.10 L1513.16 445.92 L1514.08 434.23 L1515.33 435.71 L1516.49 423.60 L1517.69 428.04 L1519.00 436.70 L1520.45 426.23 L1521.60 413.34 L1523.02 438.43 L1524.06 423.30 L1525.11 449.53 L1526.25 431.76 L1527.56 420.71 L1528.53 449.77 L1529.75 441.59 L1531.19 444.60 L1532.15 427.97 L1533.23 437.39 L1534.52 433.85 L1535.64 413.34 L1536.60 448.58 L1537.52 420.57 L1538.63 437.67 L1539.59 418.67 L1540.54 449.43 L1541.64 420.16 L1542.66 439.11 L1543.88 430.90 L1545.25 440.95 L1546.31 423.18 L1547.28 448.60 L1548.22 431.56 L1549.58 446.19 L1550.59 431.14 L1551.64 450.40 L1552.66 426.57 L1554.04 429.78 L1555.32 449.51 L1556.65 414.73 L1557.85 438.52 L1559.25 419.27 L1560.67 450.39 L1562.15 426.30 L1563.40 450.38 L1564.33 445.59 L1565.48 448.35 L1566.92 419.53 L1567.89 445.59 L1569.11 430.97 L1570.07 448.76 L1571.11 430.06 L1572.21 448.08 L1573.69 452.08 L1575.09 431.01 L1576.13 452.08 L1577.36 421.40 L1578.31 447.25 L1579.64 428.22 L1580.83 423.84 L1581.96 448.47 L1582.88 427.16 L1584.13 451.33 L1585.62 430.37 L1587.11 452.08 L1588.60 423.39 L1589.52 443.57 L1590.87 426.99 L1592.23 422.85 L1593.33 446.76 L1594.70 418.30 L1596.10 444.62 L1597.33 431.10 L1598.44 451.59 L1599.61 424.12 L1601.08 449.02 L1602.34 420.11 L1603.35 452.08 L1604.81 424.93 L1605.82 451.94 L1606.89 439.05 L1608.31 420.26 L1609.68 441.75 L1611.03 414.94 L1612.49 416.97 L1613.92 450.72 L1614.95 430.24 L1616.27 436.03 L1617.63 413.34 L1619.01 435.67 L1620.48 420.23 L1621.50 441.73 L1622.51 419.04 L1623.46 445.62 L1624.88 417.56 L1625.93 449.35 L1627.20 437.64 L1628.22 427.18 L1629.56 444.45 L1631.03 426.26 L1632.18 452.08 L1633.30 420.75 L1634.64 446.83 L1635.60 426.26 L1636.55 439.84 L1637.77 449.92 L1639.21 417.36 L1640.55 438.30 L1641.58 428.87 L1642.50 448.35 L1643.74 429.37 L1645.18 439.03 L1646.35 451.72 L1647.59 420.86 L1648.92 447.88 L1649.89 427.27 L1651.13 450.47 L1652.08 422.96 L1653.55 443.19 L1655.00 427.32 L1656.43 446.83 L1657.39 422.75 L1658.31 446.66 L1659.69 421.92 L1660.99 442.70 L1662.17 444.37 L1663.44 432.08 L1664.85 420.97 L1665.92 435.13 L1666.87 413.34 L1668.36 442.94 L1669.31 413.34 L1670.72 447.43 L1672.04 419.61 L1673.04 448.65 L1674.44 421.66 L1675.66 444.73 L1677.02 427.85 L1678.42 446.36 L1679.59 428.54 L1680.74 423.48 L1681.77 449.64 L1683.26 414.86 L1684.33 427.72 L1685.36 449.68 L1686.30 420.61 L1687.21 441.52 L1688.42 424.00 L1689.55 439.34 L1690.73 436.39 L1691.76 427.49 L1692.71 446.64 L1693.70 416.86 L1694.95 433.67 L1696.06 445.72 L1697.18 425.10 L1698.31 438.18 L1699.72 426.67 L1701.02 440.17 L1701.98 416.99 L1702.99 433.39 L1704.15 417.97 L1705.50 446.77 L1706.97 419.44 L1707.92 445.06 L1709.30 421.15 L1710.62 445.77 L1711.83 413.34 L1713.19 439.35 L1714.66 445.31 L1715.70 424.68 L1716.77 414.50 L1718.23 446.85 L1719.42 426.53 L1720.45 442.27 L1721.93 425.27 L1722.85 438.02 L1724.23 421.06 L1725.28 436.89 L1726.26 450.27 L1727.51 415.26 L1728.50 442.33 L1729.95 427.52 L1730.96 443.57 L1732.25 448.87 L1733.56 422.20 L1734.99 444.96 L1736.14 416.61 L1737.42 440.72 L1738.52 417.10 L1739.89 431.45 L1741.03 449.51 L1742.33 427.10 L1743.30 417.60 L1744.55 448.79 L1745.64 426.22 L1746.61 440.54 L1747.93 424.17 L1748.93 451.08 L1750.37 427.30 L1751.27 436.71 L1752.71 425.83 L1754.19 422.39 L1755.54 444.87 L1756.49 420.19 L1757.70 436.91 L1759.10 423.51 L1760.48 447.52 L1761.66 420.46 L1762.64 447.31 L1763.99 429.91 L1765.33 452.08 L1766.34 417.72 L1767.28 452.08 L1768.66 441.00 L1769.75 433.06 L1771.17 425.14 L1772.60 444.67 L1773.54 424.31 L1774.71 452.08 L1775.88 429.29 L1776.83 452.08 L1778.01 426.28 L1779.17 450.09 L1780.24 430.36 L1781.63 449.74 L1782.79 424.11 L1783.85 452.08 L1784.86 429.19 L1785.83 449.02 L1786.88 432.79 L1788.15 417.12 L1789.30 443.84 L1790.36 433.39 L1791.75 423.61 L1792.82 452.08 L1794.06 425.87 L1795.39 420.68 L1796.56 451.80 L1797.66 441.94 L1799.14 452.08 L1800.60 438.84 L1801.72 431.09 L1802.66 449.15 L1803.75 416.32 L1805.19 452.08 L1806.45 451.11 L1807.88 424.05 L1809.17 419.24 L1810.33 446.23 L1811.54 415.82 L1812.57 416.02 L1813.52 452.08 L1814.53 428.93 L1815.66 443.07 L1816.89 442.68 L1817.80 429.63 L1819.26 441.35 L1820.52 420.25 L1821.46 442.95 L1822.50 422.46 L1823.92 450.64 L1825.25 431.05 L1826.15 452.08 L1827.13 419.98 L1828.47 444.24 L1829.55 430.88 L1830.52 452.08 L1831.99 427.82 L1833.03 437.33 L1834.19 427.96 L1835.59 439.89 L1836.86 419.61 L1838.16 448.70 L1839.57 416.67 L1840.56 424.48 L1841.94 419.06 L1843.15 443.47 L1844.34 417.93 L1845.72 431.92" fill="none" stroke="#7eb26d" stroke-width="2" stroke-linejoin="miter" stroke-miterlimit="3"/>
<rect x="512.5" y="581.7" width="10.5" height="2.8" fill="#7eb26d"/>
<text x="527.5" y="586.7" font-size="12" fill="#e0e1e2" stroke="#e0e1e2" stroke-width="0.3">12.0.0.214[计算服务器3]</text>
<circle cx="465.70" cy="343.60" r="1.5" fill="#555"/><circle cx="461.75" cy="347.55" r="1.5" fill="#555"/><circle cx="465.70" cy="347.55" r="1.5" fill="#555"/><circle cx="457.80" cy="351.50" r="1.5" fill="#555"/><circle cx="461.75" cy="351.50" r="1.5" fill="#555"/><circle cx="465.70" cy="351.50" r="1.5" fill="#555"/>
<circle cx="1885.70" cy="343.60" r="1.5" fill="#555"/><circle cx="1881.75" cy="347.55" r="1.5" fill="#555"/><circle cx="1885.70" cy="347.55" r="1.5" fill="#555"/><circle cx="1877.80" cy="351.50" r="1.5" fill="#555"/><circle cx="1881.75" cy="351.50" r="1.5" fill="#555"/><circle cx="1885.70" cy="351.50" r="1.5" fill="#555"/>
<circle cx="465.70" cy="591.60" r="1.5" fill="#555"/><circle cx="461.75" cy="595.55" r="1.5" fill="#555"/><circle cx="465.70" cy="595.55" r="1.5" fill="#555"/><circle cx="457.80" cy="599.50" r="1.5" fill="#555"/><circle cx="461.75" cy="599.50" r="1.5" fill="#555"/><circle cx="465.70" cy="599.50" r="1.5" fill="#555"/>
<circle cx="1885.70" cy="591.60" r="1.5" fill="#555"/><circle cx="1881.75" cy="595.55" r="1.5" fill="#555"/><circle cx="1885.70" cy="595.55" r="1.5" fill="#555"/><circle cx="1877.80" cy="599.50" r="1.5" fill="#555"/><circle cx="1881.75" cy="599.50" r="1.5" fill="#555"/><circle cx="1885.70" cy="599.50" r="1.5" fill="#555"/>
<circle cx="1885.70" cy="770.60" r="1.5" fill="#555"/><circle cx="1881.75" cy="774.55" r="1.5" fill="#555"/><circle cx="1885.70" cy="774.55" r="1.5" fill="#555"/><circle cx="1877.80" cy="778.50" r="1.5" fill="#555"/><circle cx="1881.75" cy="778.50" r="1.5" fill="#555"/><circle cx="1885.70" cy="778.50" r="1.5" fill="#555"/>
<line x1="44.3" y1="823.5" x2="1864" y2="823.5" stroke="#555555" stroke-width="1"/>
<text x="38.5" y="826.7" text-anchor="end" font-size="12.5" fill="#d8d9da" stroke="#d8d9da" stroke-width="0.2">180</text>
<line x1="44.3" y1="855.5" x2="1864" y2="855.5" stroke="#555555" stroke-width="1"/>
<text x="38.5" y="858.7" text-anchor="end" font-size="12.5" fill="#d8d9da" stroke="#d8d9da" stroke-width="0.2">160</text>
<line x1="44.3" y1="887.5" x2="1864" y2="887.5" stroke="#555555" stroke-width="1"/>
<text x="38.5" y="890.7" text-anchor="end" font-size="12.5" fill="#d8d9da" stroke="#d8d9da" stroke-width="0.2">140</text>
<line x1="53.50" y1="823" x2="53.50" y2="883" stroke="#555555" stroke-width="1"/>
<line x1="129.50" y1="823" x2="129.50" y2="883" stroke="#555555" stroke-width="1"/>
<line x1="205.50" y1="823" x2="205.50" y2="883" stroke="#555555" stroke-width="1"/>
<line x1="281.50" y1="823" x2="281.50" y2="883" stroke="#555555" stroke-width="1"/>
<line x1="357.50" y1="823" x2="357.50" y2="883" stroke="#555555" stroke-width="1"/>
<line x1="432.50" y1="823" x2="432.50" y2="883" stroke="#555555" stroke-width="1"/>
<line x1="508.50" y1="823" x2="508.50" y2="883" stroke="#555555" stroke-width="1"/>
<line x1="584.50" y1="823" x2="584.50" y2="883" stroke="#555555" stroke-width="1"/>
<line x1="660.50" y1="823" x2="660.50" y2="883" stroke="#555555" stroke-width="1"/>
<line x1="735.50" y1="823" x2="735.50" y2="883" stroke="#555555" stroke-width="1"/>
<line x1="811.50" y1="823" x2="811.50" y2="883" stroke="#555555" stroke-width="1"/>
<line x1="887.50" y1="823" x2="887.50" y2="883" stroke="#555555" stroke-width="1"/>
<line x1="963.50" y1="823" x2="963.50" y2="883" stroke="#555555" stroke-width="1"/>
<line x1="1039.50" y1="823" x2="1039.50" y2="883" stroke="#555555" stroke-width="1"/>
<line x1="1115.50" y1="823" x2="1115.50" y2="883" stroke="#555555" stroke-width="1"/>
<line x1="1190.50" y1="823" x2="1190.50" y2="883" stroke="#555555" stroke-width="1"/>
<line x1="1266.50" y1="823" x2="1266.50" y2="883" stroke="#555555" stroke-width="1"/>
<line x1="1342.50" y1="823" x2="1342.50" y2="883" stroke="#555555" stroke-width="1"/>
<line x1="1418.50" y1="823" x2="1418.50" y2="883" stroke="#555555" stroke-width="1"/>
<line x1="1494.50" y1="823" x2="1494.50" y2="883" stroke="#555555" stroke-width="1"/>
<line x1="1569.50" y1="823" x2="1569.50" y2="883" stroke="#555555" stroke-width="1"/>
<line x1="1645.50" y1="823" x2="1645.50" y2="883" stroke="#555555" stroke-width="1"/>
<line x1="1721.50" y1="823" x2="1721.50" y2="883" stroke="#555555" stroke-width="1"/>
<line x1="1797.50" y1="823" x2="1797.50" y2="883" stroke="#555555" stroke-width="1"/>
</svg>
<!-- PANELS_END -->
</body></html>
